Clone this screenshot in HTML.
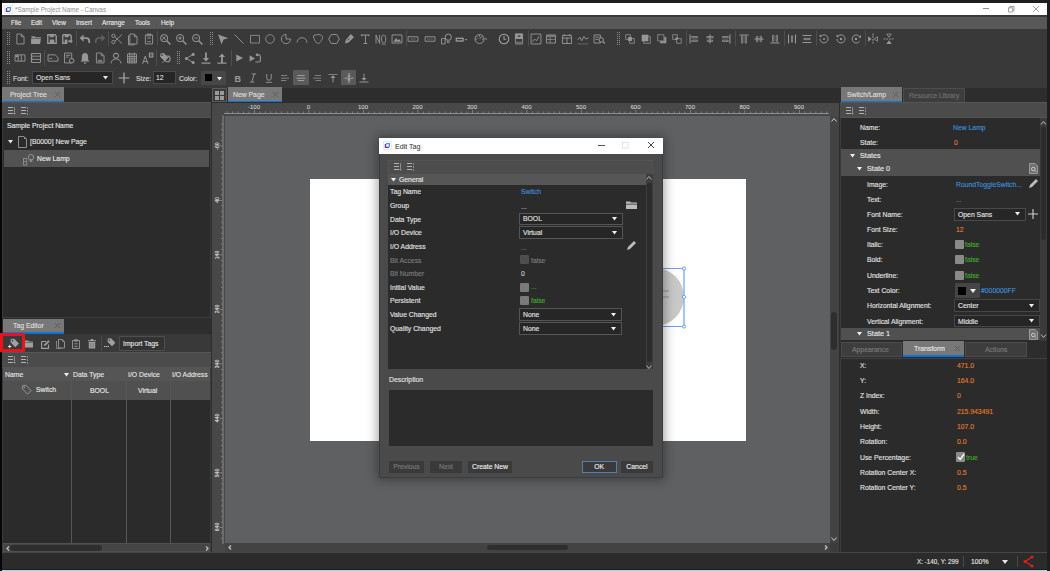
<!DOCTYPE html><html><head><meta charset="utf-8"><style>
*{margin:0;padding:0;box-sizing:border-box}
html,body{width:1050px;height:571px;overflow:hidden;background:#1e1e1e;font-family:"Liberation Sans",sans-serif}
.a{position:absolute}
.t{position:absolute;white-space:nowrap;line-height:12px;height:12px;font-size:7.5px;-webkit-text-stroke:0.15px currentColor;transform:scaleX(.91);transform-origin:0 50%}
.tc{transform-origin:50% 50%}
svg{overflow:visible}
</style></head><body><div class="a" style="left:2px;top:3px;width:1045px;height:12px;background:#ffffff;"></div>
<div class="a" style="left:2px;top:15px;width:1045px;height:1.5px;background:#3a3a3a;"></div>
<svg class="a" style="left:3.5px;top:4.5px;" width="9" height="9" viewBox="0 0 9 9"><rect x="0.5" y="0.5" width="8" height="8" fill="#fafafa" stroke="#e8e8ec" stroke-width="0.8"/><path d="M3 2h4v4h-1.3v-2.7h-2.7z" fill="#3aa0dd"/><path d="M1.8 3h1.4v2.7h2.8v1.3h-4.2z" fill="#6b3c9b"/></svg>
<div class="t" style="left:15px;top:4.1px;color:#959595;font-size:7.2px;transform:scaleX(.88);-webkit-text-stroke:0.05px currentColor">*Sample Project Name - Canvas</div>
<svg class="a" style="left:983px;top:8px;" width="6" height="1" viewBox="0 0 6 1"><path d="M0 0.5h6" stroke="#777" stroke-width="0.8"/></svg>
<svg class="a" style="left:1007.5px;top:5.5px;" width="6.5" height="6.5" viewBox="0 0 6.5 6.5"><path d="M0.5 1.8h4.2v4.2h-4.2z M1.8 1.8v-1.3h4.2v4.2h-1.3" fill="none" stroke="#888" stroke-width="0.8"/></svg>
<svg class="a" style="left:1032.5px;top:5.5px;" width="6" height="6" viewBox="0 0 6 6"><path d="M0 0l6 6 M6 0l-6 6" stroke="#888" stroke-width="0.8"/></svg>
<div class="a" style="left:2px;top:16.5px;width:1045px;height:12.5px;background:#585858;"></div>
<div class="t" style="left:11px;top:17.1px;color:#e6e6e6;font-size:7.2px;transform:scaleX(.89)">File</div>
<div class="t" style="left:30.5px;top:17.1px;color:#e6e6e6;font-size:7.2px;transform:scaleX(.89)">Edit</div>
<div class="t" style="left:51.5px;top:17.1px;color:#e6e6e6;font-size:7.2px;transform:scaleX(.89)">View</div>
<div class="t" style="left:76px;top:17.1px;color:#e6e6e6;font-size:7.2px;transform:scaleX(.89)">Insert</div>
<div class="t" style="left:102px;top:17.1px;color:#e6e6e6;font-size:7.2px;transform:scaleX(.89)">Arrange</div>
<div class="t" style="left:135px;top:17.1px;color:#e6e6e6;font-size:7.2px;transform:scaleX(.89)">Tools</div>
<div class="t" style="left:160.5px;top:17.1px;color:#e6e6e6;font-size:7.2px;transform:scaleX(.89)">Help</div>
<div class="a" style="left:2px;top:29px;width:1045px;height:59px;background:#393939;"></div>
<div class="a" style="left:2px;top:88px;width:1045px;height:465px;background:#2d2d2d;"></div>
<div class="a" style="left:2px;top:552px;width:1045px;height:1px;background:#4a4a4a;"></div>
<div class="a" style="left:2px;top:553px;width:1045px;height:16px;background:#2b2b2b;"></div>
<div class="a" style="left:2px;top:569.5px;width:1045px;height:1.5px;background:#c4cad2;"></div>
<div class="a" style="left:0px;top:0px;width:1.5px;height:571px;background:#060606;"></div>
<div class="t" style="left:917px;top:556.1px;color:#e0e0e0;font-size:7.5px;transform:scaleX(.84)">X: -140, Y: 299</div>
<div class="a" style="left:963px;top:556px;width:1px;height:11px;background:#4a4a4a;"></div>
<div class="t" style="left:971px;top:556.1px;color:#e0e0e0;font-size:7.5px;">100%</div>
<svg class="a" style="left:1002px;top:560px;" width="6" height="4" viewBox="0 0 6 4"><path d="M0 0h6l-3 4z" fill="#e8e8e8"/></svg>
<div class="a" style="left:1017px;top:556px;width:1px;height:11px;background:#4a4a4a;"></div>
<svg class="a" style="left:1023px;top:555px;" width="11" height="13" viewBox="0 0 11 13"><circle cx="9" cy="2" r="1.6" fill="#e0201c"/><circle cx="2" cy="6.5" r="1.6" fill="#e0201c"/><circle cx="9" cy="11" r="1.6" fill="#e0201c"/><path d="M9 2L2 6.5 9 11" fill="none" stroke="#e0201c" stroke-width="1.3"/></svg>
<svg class="a" style="left:13.0px;top:31.5px;" width="14" height="14" viewBox="0 0 14 14"><g transform="translate(7.0 7.0) scale(0.9) translate(-7.0 -7.0)"><path d="M3.5 1.5h5l3 3v8h-8z M8.5 1.5v3h3" fill="none" stroke="#979797" stroke-width="1"/></g></svg>
<svg class="a" style="left:29.0px;top:31.5px;" width="14" height="14" viewBox="0 0 14 14"><g transform="translate(7.0 7.0) scale(0.9) translate(-7.0 -7.0)"><path d="M1.5 4h4l1 1h6v1h-10z" fill="#979797"/><path d="M1.5 6.5h11l-1 6h-10z" fill="#979797"/></g></svg>
<svg class="a" style="left:45.0px;top:31.5px;" width="14" height="14" viewBox="0 0 14 14"><g transform="translate(7.0 7.0) scale(0.9) translate(-7.0 -7.0)"><path d="M2.3 2.3h8l1.4 1.4v8h-9.4z" fill="none" stroke="#979797" stroke-width="1.5"/><path d="M4.5 2h4.5v3h-4.5z M4.5 7.5h5v4h-5z" fill="#979797"/></g></svg>
<svg class="a" style="left:60.0px;top:31.5px;" width="14" height="14" viewBox="0 0 14 14"><g transform="translate(7.0 7.0) scale(0.9) translate(-7.0 -7.0)"><path d="M2.3 2.3h8l1.4 1.4v4 M2.3 2.3v9.4h5" fill="none" stroke="#979797" stroke-width="1.5"/><path d="M4.5 2h4.5v3h-4.5z M4.5 7.5h3v4h-3z" fill="#979797"/><path d="M8.5 8.5h2.5v-1.5l2.5 2.5-2.5 2.5v-1.5h-2.5z" fill="#979797"/></g></svg>
<svg class="a" style="left:78.0px;top:31.5px;" width="14" height="14" viewBox="0 0 14 14"><g transform="translate(7.0 7.0) scale(0.9) translate(-7.0 -7.0)"><path d="M5 6h3.5a3.2 3.2 0 0 1 3.2 3.2v2.3" fill="none" stroke="#979797" stroke-width="2"/><path d="M1 6l4.5-4v8z" fill="#979797"/></g></svg>
<svg class="a" style="left:93.0px;top:31.5px;" width="14" height="14" viewBox="0 0 14 14"><g transform="translate(7.0 7.0) scale(0.9) translate(-7.0 -7.0)"><path d="M9 6h-3.5a3.2 3.2 0 0 0 -3.2 3.2v2.3" fill="none" stroke="#5e5e5e" stroke-width="2"/><path d="M13 6l-4.5-4v8z" fill="#5e5e5e"/></g></svg>
<svg class="a" style="left:110.0px;top:31.5px;" width="14" height="14" viewBox="0 0 14 14"><g transform="translate(7.0 7.0) scale(0.9) translate(-7.0 -7.0)"><path d="M4.5 4.5l8 7.5 M4.5 9.5l8-7.5" fill="none" stroke="#979797" stroke-width="1"/><circle cx="3" cy="3.5" r="1.8" fill="none" stroke="#979797"/><circle cx="3" cy="10.5" r="1.8" fill="none" stroke="#979797"/></g></svg>
<svg class="a" style="left:126.0px;top:31.5px;" width="14" height="14" viewBox="0 0 14 14"><g transform="translate(7.0 7.0) scale(0.9) translate(-7.0 -7.0)"><path d="M3.5 1.5h5l3 3v8h-8z M8.5 1.5v3h3" fill="none" stroke="#979797" stroke-width="1"/><path d="M2 3v10.5h7" fill="none" stroke="#979797" stroke-width="1"/></g></svg>
<svg class="a" style="left:141.5px;top:31.5px;" width="14" height="14" viewBox="0 0 14 14"><g transform="translate(7.0 7.0) scale(0.9) translate(-7.0 -7.0)"><path d="M3 2.5h8v10h-8z M5 1.5h4v2h-4z M5 6h4 M5 10h4" fill="none" stroke="#979797" stroke-width="1"/></g></svg>
<svg class="a" style="left:158.0px;top:31.5px;" width="14" height="14" viewBox="0 0 14 14"><g transform="translate(7.0 7.0) scale(0.9) translate(-7.0 -7.0)"><circle cx="6" cy="6" r="4" fill="none" stroke="#a3a3a3"/><path d="M9 9l4 4" fill="none" stroke="#979797" stroke-width="1.6"/><path d="M4 4l4 4 M8 4l-4 4" fill="none" stroke="#979797" stroke-width="1"/></g></svg>
<svg class="a" style="left:174.0px;top:31.5px;" width="14" height="14" viewBox="0 0 14 14"><g transform="translate(7.0 7.0) scale(0.9) translate(-7.0 -7.0)"><circle cx="6" cy="6" r="4" fill="none" stroke="#a3a3a3"/><path d="M9 9l4 4" fill="none" stroke="#979797" stroke-width="1.6"/><path d="M4 6h4 M6 4v4" fill="none" stroke="#979797" stroke-width="1"/></g></svg>
<svg class="a" style="left:190.0px;top:31.5px;" width="14" height="14" viewBox="0 0 14 14"><g transform="translate(7.0 7.0) scale(0.9) translate(-7.0 -7.0)"><circle cx="6" cy="6" r="4" fill="none" stroke="#a3a3a3"/><path d="M9 9l4 4" fill="none" stroke="#979797" stroke-width="1.6"/><path d="M4 6h4" fill="none" stroke="#979797" stroke-width="1"/></g></svg>
<svg class="a" style="left:216.0px;top:31.5px;" width="14" height="14" viewBox="0 0 14 14"><g transform="translate(7.0 7.0) scale(0.9) translate(-7.0 -7.0)"><path d="M1.5 2L13 6.3 7.5 7.5 5.5 13z" fill="#979797"/></g></svg>
<svg class="a" style="left:232.0px;top:31.5px;" width="14" height="14" viewBox="0 0 14 14"><g transform="translate(7.0 7.0) scale(0.9) translate(-7.0 -7.0)"><path d="M2 2l10 10" fill="none" stroke="#979797" stroke-width="1"/></g></svg>
<svg class="a" style="left:247.5px;top:31.5px;" width="14" height="14" viewBox="0 0 14 14"><g transform="translate(7.0 7.0) scale(0.9) translate(-7.0 -7.0)"><path d="M2 3h10v8.5h-10z" fill="none" stroke="#979797" stroke-width="0.9"/></g></svg>
<svg class="a" style="left:263.0px;top:31.5px;" width="14" height="14" viewBox="0 0 14 14"><g transform="translate(7.0 7.0) scale(0.9) translate(-7.0 -7.0)"><circle cx="7" cy="7" r="4.8" fill="none" stroke="#979797" stroke-width="0.9"/></g></svg>
<svg class="a" style="left:278.5px;top:31.5px;" width="14" height="14" viewBox="0 0 14 14"><g transform="translate(7.0 7.0) scale(0.9) translate(-7.0 -7.0)"><path d="M7 7v-5.2 A5.2 5.2 0 1 0 12.2 7z" fill="none" stroke="#979797" stroke-width="1"/></g></svg>
<svg class="a" style="left:295.0px;top:31.5px;" width="14" height="14" viewBox="0 0 14 14"><g transform="translate(7.0 7.0) scale(0.9) translate(-7.0 -7.0)"><path d="M1.5 11A5.5 5.5 0 0 1 12.5 11" fill="none" stroke="#979797" stroke-width="1"/></g></svg>
<svg class="a" style="left:311.0px;top:31.5px;" width="14" height="14" viewBox="0 0 14 14"><g transform="translate(7.0 7.0) scale(0.9) translate(-7.0 -7.0)"><path d="M2 3.5 C6 1 12 2 12 5 C12 8 9 12 7 12 C5 12 2 7 2 3.5z" fill="none" stroke="#979797" stroke-width="1"/></g></svg>
<svg class="a" style="left:326.5px;top:31.5px;" width="14" height="14" viewBox="0 0 14 14"><g transform="translate(7.0 7.0) scale(0.9) translate(-7.0 -7.0)"><path d="M4 2h6l3 5-3 5h-6l-3-5z" fill="none" stroke="#979797" stroke-width="1"/></g></svg>
<svg class="a" style="left:342.0px;top:31.5px;" width="14" height="14" viewBox="0 0 14 14"><g transform="translate(7.0 7.0) scale(0.9) translate(-7.0 -7.0)"><path d="M9 1.5l3.5 3.5-6 6-4 1 1-4z" fill="#979797"/><path d="M5.5 8.5l2-2" fill="none" stroke="#393939" stroke-width="1"/></g></svg>
<svg class="a" style="left:358.0px;top:31.5px;" width="14" height="14" viewBox="0 0 14 14"><g transform="translate(7.0 7.0) scale(0.9) translate(-7.0 -7.0)"><path d="M2 2h10v2h-1l-.5-.8h-2.5v8.3h1.5v1h-4v-1h1.5v-8.3h-2.5l-.5.8h-1z" fill="#979797"/></g></svg>
<svg class="a" style="left:374.0px;top:31.5px;" width="14" height="14" viewBox="0 0 14 14"><g transform="translate(7.0 7.0) scale(0.9) translate(-7.0 -7.0)"><path d="M1.5 12V2.5l4 9.5V2.5" fill="none" stroke="#979797" stroke-width="1"/><ellipse cx="10" cy="7" rx="2.3" ry="4.5" fill="none" stroke="#979797" stroke-width="1"/><path d="M7.5 12.8h5" fill="none" stroke="#979797" stroke-width="0.8"/></g></svg>
<svg class="a" style="left:390.0px;top:31.5px;" width="14" height="14" viewBox="0 0 14 14"><g transform="translate(7.0 7.0) scale(0.9) translate(-7.0 -7.0)"><path d="M1.5 2.5h11v9h-11z" fill="none" stroke="#979797" stroke-width="1"/><path d="M3 10l3-4 2 2.5 1.5-1.5 2 3z" fill="#979797"/></g></svg>
<svg class="a" style="left:406.0px;top:31.5px;" width="14" height="14" viewBox="0 0 14 14"><g transform="translate(7.0 7.0) scale(0.9) translate(-7.0 -7.0)"><path d="M1.5 4.5h11v5h-11z" fill="none" stroke="#979797" stroke-width="1"/><path d="M4 6.5h6v1h-6z" fill="#6e6e6e"/></g></svg>
<svg class="a" style="left:422.5px;top:31.5px;" width="14" height="14" viewBox="0 0 14 14"><g transform="translate(7.0 7.0) scale(0.9) translate(-7.0 -7.0)"><path d="M1.5 4.5h11v5h-11z" fill="none" stroke="#979797" stroke-width="1"/><path d="M4 6.3h1.3v1.4h-1.3z M6.3 6.3h1.3v1.4h-1.3z M8.6 6.3h1.3v1.4h-1.3z" fill="#6e6e6e"/></g></svg>
<svg class="a" style="left:438.5px;top:31.5px;" width="14" height="14" viewBox="0 0 14 14"><g transform="translate(7.0 7.0) scale(0.9) translate(-7.0 -7.0)"><path d="M2 6.5h4v6h-4z" fill="none" stroke="#979797" stroke-width="1"/><circle cx="9.5" cy="5" r="3.5" fill="none" stroke="#a3a3a3"/><path d="M8.5 9v2h2v-2" fill="none" stroke="#979797" stroke-width="1"/></g></svg>
<svg class="a" style="left:454.0px;top:31.5px;" width="14" height="14" viewBox="0 0 14 14"><g transform="translate(7.0 7.0) scale(0.9) translate(-7.0 -7.0)"><path d="M1 5.5h9v4.5h-9z" fill="#979797"/><path d="M2.5 7h6v1.5h-6z" fill="#393939"/><path d="M11 7h3l-1.5 2z" fill="#979797"/></g></svg>
<svg class="a" style="left:473.0px;top:31.5px;" width="14" height="14" viewBox="0 0 14 14"><g transform="translate(7.0 7.0) scale(0.9) translate(-7.0 -7.0)"><path d="M6.5 2A5 5 0 1 1 6.49 2z" fill="none" stroke="#979797" stroke-width="1.1"/><path d="M6.5 2.5v2 M2 7h2 M9 7h2 M3.3 3.8l1.3 1.3 M9.7 3.8l-1.3 1.3 M6.5 7l2-2.5" fill="none" stroke="#979797" stroke-width="1"/><path d="M12.5 6.5h2.5l-1.25 1.8z" fill="#979797"/></g></svg>
<svg class="a" style="left:496.5px;top:31.5px;" width="14" height="14" viewBox="0 0 14 14"><g transform="translate(7.0 7.0) scale(0.9) translate(-7.0 -7.0)"><circle cx="7" cy="7" r="5.3" fill="none" stroke="#a3a3a3" stroke-width="1.2"/><path d="M7 3.5v3.8h2.5" fill="none" stroke="#979797" stroke-width="1.2"/></g></svg>
<svg class="a" style="left:511.5px;top:31.5px;" width="14" height="14" viewBox="0 0 14 14"><g transform="translate(7.0 7.0) scale(0.9) translate(-7.0 -7.0)"><path d="M3 1.5h8v11h-8z" fill="none" stroke="#979797" stroke-width="1"/><path d="M3 1h8v6h-8z" fill="#979797"/><path d="M5.5 3h3v1.5h-3z" fill="#393939"/><path d="M3 10h8v2.5h-8z" fill="#6e6e6e"/></g></svg>
<svg class="a" style="left:529.0px;top:31.5px;" width="14" height="14" viewBox="0 0 14 14"><g transform="translate(7.0 7.0) scale(0.9) translate(-7.0 -7.0)"><path d="M1.5 1.5h11v11h-11z" fill="none" stroke="#979797" stroke-width="1"/><path d="M3 10l2.5-3 2 2 3-5" fill="none" stroke="#979797" stroke-width="1"/></g></svg>
<svg class="a" style="left:544.0px;top:31.5px;" width="14" height="14" viewBox="0 0 14 14"><g transform="translate(7.0 7.0) scale(0.9) translate(-7.0 -7.0)"><path d="M2 2.5h10v9h-10z" fill="none" stroke="#979797" stroke-width="1"/><path d="M2 2.5h10v2.5h-10z" fill="#7a7a7a"/><path d="M2 7.5h10 M6 5v6.5" fill="none" stroke="#979797" stroke-width="0.8"/></g></svg>
<svg class="a" style="left:560.0px;top:31.5px;" width="14" height="14" viewBox="0 0 14 14"><g transform="translate(7.0 7.0) scale(0.9) translate(-7.0 -7.0)"><path d="M2 3h10v9h-10z M7 5.5v6.5 M2 6h10" fill="none" stroke="#979797" stroke-width="1"/><path d="M3.5 1.5h1v2.5h-1z M9.5 1.5h1v2.5h-1z" fill="#979797"/></g></svg>
<svg class="a" style="left:576.0px;top:31.5px;" width="14" height="14" viewBox="0 0 14 14"><g transform="translate(7.0 7.0) scale(0.9) translate(-7.0 -7.0)"><path d="M1 8l2.5-3 2 4 2.5-5 2 3 3-1" fill="none" stroke="#979797" stroke-width="1"/><path d="M1 12.5h12" fill="none" stroke="#6a6a6a" stroke-width="1"/></g></svg>
<svg class="a" style="left:592.0px;top:31.5px;" width="14" height="14" viewBox="0 0 14 14"><g transform="translate(7.0 7.0) scale(0.9) translate(-7.0 -7.0)"><path d="M1.5 2.5h7v9h-7z M3 5h4 M3 7.5h3" fill="none" stroke="#979797" stroke-width="1"/><circle cx="9.5" cy="8" r="2.5" fill="#393939" stroke="#a3a3a3"/><path d="M11.5 10l2 2" fill="none" stroke="#979797" stroke-width="1.4"/></g></svg>
<svg class="a" style="left:623.0px;top:31.5px;" width="14" height="14" viewBox="0 0 14 14"><g transform="translate(7.0 7.0) scale(0.78) translate(-7.0 -7.0)"><path d="M1.5 1.5h6v6h-6z M6.5 6.5h6v6h-6z" fill="none" stroke="#979797" stroke-width="1"/><path d="M4.5 4.5h5v5h-5z" fill="#979797"/></g></svg>
<svg class="a" style="left:639.0px;top:31.5px;" width="14" height="14" viewBox="0 0 14 14"><g transform="translate(7.0 7.0) scale(0.78) translate(-7.0 -7.0)"><path d="M1.5 1.5h8.5v8.5h-8.5z" fill="#979797"/><path d="M4 4h8.5v8.5h-8.5z" fill="none" stroke="#979797" stroke-width="1"/></g></svg>
<svg class="a" style="left:655.0px;top:31.5px;" width="14" height="14" viewBox="0 0 14 14"><g transform="translate(7.0 7.0) scale(0.78) translate(-7.0 -7.0)"><path d="M1.5 1.5h8v8h-8z" fill="none" stroke="#979797" stroke-width="1"/><path d="M10 4.5h2.5v8h-8v-2.5h5.5z" fill="#979797"/></g></svg>
<svg class="a" style="left:670.0px;top:31.5px;" width="14" height="14" viewBox="0 0 14 14"><g transform="translate(7.0 7.0) scale(0.78) translate(-7.0 -7.0)"><path d="M1.5 1.5h6v6h-6z M6.5 6.5h6v6h-6z" fill="none" stroke="#979797" stroke-width="1"/><path d="M5 5h3v3h-3z" fill="#979797"/></g></svg>
<svg class="a" style="left:687.0px;top:31.5px;" width="14" height="14" viewBox="0 0 14 14"><g transform="translate(7.0 7.0) scale(0.9) translate(-7.0 -7.0)"><path d="M2 2h1.2v10h-1.2z" fill="#979797"/><path d="M4.5 4.3h6.5v1.4h-6.5z M4.5 8.3h6.5v1.4h-6.5z" fill="none" stroke="#979797" stroke-width="0.9"/></g></svg>
<svg class="a" style="left:703.0px;top:31.5px;" width="14" height="14" viewBox="0 0 14 14"><g transform="translate(7.0 7.0) scale(0.9) translate(-7.0 -7.0)"><path d="M6.4 2h1.2v10h-1.2z" fill="#979797"/><path d="M3.5 4.3h7v1.4h-7z M4 8.3h6v1.4h-6z" fill="none" stroke="#979797" stroke-width="0.9"/></g></svg>
<svg class="a" style="left:719.0px;top:31.5px;" width="14" height="14" viewBox="0 0 14 14"><g transform="translate(7.0 7.0) scale(0.9) translate(-7.0 -7.0)"><path d="M10.8 2h1.2v10h-1.2z" fill="#979797"/><path d="M3 4.3h6.5v1.4h-6.5z M3 8.3h6.5v1.4h-6.5z" fill="none" stroke="#979797" stroke-width="0.9"/></g></svg>
<svg class="a" style="left:737.0px;top:31.5px;" width="14" height="14" viewBox="0 0 14 14"><g transform="translate(7.0 7.0) scale(0.9) translate(-7.0 -7.0)"><path d="M2 2h10v1.2h-10z" fill="#979797"/><path d="M4.3 4v7.5h1.4v-7.5z M8.3 4v7.5h1.4v-7.5z" fill="none" stroke="#979797" stroke-width="0.9"/></g></svg>
<svg class="a" style="left:752.0px;top:31.5px;" width="14" height="14" viewBox="0 0 14 14"><g transform="translate(7.0 7.0) scale(0.9) translate(-7.0 -7.0)"><path d="M2 6.4h10v1.2h-10z" fill="#979797"/><path d="M4.3 4v6h1.4v-6z M8.3 4v6h1.4v-6z" fill="none" stroke="#979797" stroke-width="0.9"/></g></svg>
<svg class="a" style="left:768.0px;top:31.5px;" width="14" height="14" viewBox="0 0 14 14"><g transform="translate(7.0 7.0) scale(0.9) translate(-7.0 -7.0)"><path d="M2 10.8h10v1.2h-10z" fill="#979797"/><path d="M4.3 3v6.5h1.4v-6.5z M8.3 3v6.5h1.4v-6.5z" fill="none" stroke="#979797" stroke-width="0.9"/></g></svg>
<svg class="a" style="left:784.5px;top:31.5px;" width="14" height="14" viewBox="0 0 14 14"><g transform="translate(7.0 7.0) scale(0.9) translate(-7.0 -7.0)"><path d="M2.5 2h1.2v10h-1.2z M10.3 2h1.2v10h-1.2z" fill="#979797"/><path d="M6.3 3.5v7h1.4v-7z" fill="none" stroke="#979797" stroke-width="0.9"/></g></svg>
<svg class="a" style="left:800.0px;top:31.5px;" width="14" height="14" viewBox="0 0 14 14"><g transform="translate(7.0 7.0) scale(0.9) translate(-7.0 -7.0)"><path d="M2 2.5h10v1.2h-10z M2 10.3h10v1.2h-10z" fill="#979797"/><path d="M3.5 6.3h7v1.4h-7z" fill="none" stroke="#979797" stroke-width="0.9"/></g></svg>
<svg class="a" style="left:817.0px;top:31.5px;" width="14" height="14" viewBox="0 0 14 14"><g transform="translate(7.0 7.0) scale(0.9) translate(-7.0 -7.0)"><path d="M4 3.5A4.5 4.5 0 1 1 2.5 7" fill="none" stroke="#979797" stroke-width="1.1"/><path d="M1.5 2.5l3.5 0.5-2 2.5z" fill="#979797"/><circle cx="7" cy="7" r="1.1" fill="#979797"/></g></svg>
<svg class="a" style="left:833.5px;top:31.5px;" width="14" height="14" viewBox="0 0 14 14"><g transform="translate(7.0 7.0) scale(0.9) translate(-7.0 -7.0)"><path d="M4 3.5A4.5 4.5 0 1 1 2.5 7" fill="none" stroke="#979797" stroke-width="1.1"/><path d="M1.5 2.5l3.5 0.5-2 2.5z" fill="#979797"/><path d="M5.8 5.8h2.4v2.4h-2.4z" fill="#979797"/></g></svg>
<svg class="a" style="left:849.0px;top:31.5px;" width="14" height="14" viewBox="0 0 14 14"><g transform="translate(7.0 7.0) scale(0.9) translate(-7.0 -7.0)"><path d="M11 4.5A4.5 4.5 0 1 0 11 9.5" fill="none" stroke="#979797" stroke-width="1.1"/><path d="M12.5 2.5l0 3.5-3-1z" fill="#979797"/><path d="M5.8 5.8h2.4v2.4h-2.4z" fill="#979797"/></g></svg>
<svg class="a" style="left:866.0px;top:31.5px;" width="14" height="14" viewBox="0 0 14 14"><g transform="translate(7.0 7.0) scale(0.9) translate(-7.0 -7.0)"><path d="M6.4 1h1.2v2h-1.2z M6.4 4h1.2v2h-1.2z M6.4 7h1.2v2h-1.2z M6.4 10h1.2v2h-1.2z" fill="#979797"/><path d="M1.5 4l4 3-4 3z" fill="#979797"/><path d="M12 4.5l-3.5 2.5 3.5 2.5z" fill="none" stroke="#979797" stroke-width="0.9"/></g></svg>
<svg class="a" style="left:882.0px;top:31.5px;" width="14" height="14" viewBox="0 0 14 14"><g transform="translate(7.0 7.0) scale(0.9) translate(-7.0 -7.0)"><path d="M1 6.4h2v1.2h-2z M4 6.4h2v1.2h-2z M7 6.4h2v1.2h-2z M10 6.4h2v1.2h-2z" fill="#979797"/><path d="M4 12.5l3-4 3 4z" fill="#979797"/><path d="M4.5 1.5l2.5 3.5 2.5-3.5z" fill="none" stroke="#979797" stroke-width="0.9"/></g></svg>
<svg class="a" style="left:13.0px;top:51.0px;" width="14" height="14" viewBox="0 0 14 14"><g transform="translate(7.0 7.0) scale(0.9) translate(-7.0 -7.0)"><path d="M1.5 3.5h11v7h-11z M5 3.5v7 M8.5 3.5v7" fill="none" stroke="#979797" stroke-width="1"/><path d="M2 4h3v2h-3z" fill="#979797"/></g></svg>
<svg class="a" style="left:29.0px;top:51.0px;" width="14" height="14" viewBox="0 0 14 14"><g transform="translate(7.0 7.0) scale(0.9) translate(-7.0 -7.0)"><path d="M2 2h10v10h-10z M2 5h10 M2 8.5h10" fill="none" stroke="#979797" stroke-width="1"/><path d="M1 3h2v1h-2z M1 6.5h2v1h-2z M1 10h2v1h-2z" fill="#979797"/></g></svg>
<svg class="a" style="left:45.5px;top:51.0px;" width="14" height="14" viewBox="0 0 14 14"><g transform="translate(7.0 7.0) scale(0.9) translate(-7.0 -7.0)"><path d="M1.5 3.5h8l3 3v4h-11z" fill="none" stroke="#979797" stroke-width="1"/><path d="M3 7.5h3" fill="none" stroke="#979797" stroke-width="1"/></g></svg>
<svg class="a" style="left:62.0px;top:51.0px;" width="14" height="14" viewBox="0 0 14 14"><g transform="translate(7.0 7.0) scale(0.9) translate(-7.0 -7.0)"><path d="M2 1.5h8v11h-8z M3.5 4h5 M3.5 6h3" fill="none" stroke="#979797" stroke-width="1"/><circle cx="10" cy="10" r="2.5" fill="#393939" stroke="#a3a3a3"/></g></svg>
<svg class="a" style="left:77.5px;top:51.0px;" width="14" height="14" viewBox="0 0 14 14"><g transform="translate(7.0 7.0) scale(0.9) translate(-7.0 -7.0)"><path d="M7 1.5c2.5 0 3.5 2 3.5 4.5v3l1.5 2h-10l1.5-2v-3c0-2.5 1-4.5 3.5-4.5z M5.5 12h3a1.5 1.5 0 0 1 -3 0z" fill="#979797"/></g></svg>
<svg class="a" style="left:93.0px;top:51.0px;" width="14" height="14" viewBox="0 0 14 14"><g transform="translate(7.0 7.0) scale(0.9) translate(-7.0 -7.0)"><path d="M3 1.5h5.5l3 3v8h-8.5z M8.5 1.5v3h3" fill="none" stroke="#979797" stroke-width="1"/><path d="M4.5 9h5v2.5h-5z" fill="#7a7a7a"/></g></svg>
<svg class="a" style="left:109.0px;top:51.0px;" width="14" height="14" viewBox="0 0 14 14"><g transform="translate(7.0 7.0) scale(0.9) translate(-7.0 -7.0)"><circle cx="7" cy="4.5" r="2.8" fill="none" stroke="#a3a3a3" stroke-width="1.1"/><path d="M1.5 13a5.5 5 0 0 1 11 0" fill="none" stroke="#979797" stroke-width="1.1"/></g></svg>
<svg class="a" style="left:125.0px;top:51.0px;" width="14" height="14" viewBox="0 0 14 14"><g transform="translate(7.0 7.0) scale(0.9) translate(-7.0 -7.0)"><path d="M2 2.5h10v10h-10z M2 5.5h10 M2 8h10 M2 10.5h10 M4.5 2.5v10 M7 2.5v10 M9.5 2.5v10" fill="none" stroke="#979797" stroke-width="1"/><path d="M4 1h1v2h-1z M9 1h1v2h-1z" fill="#979797"/></g></svg>
<svg class="a" style="left:141.0px;top:51.0px;" width="14" height="14" viewBox="0 0 14 14"><g transform="translate(7.0 7.0) scale(0.9) translate(-7.0 -7.0)"><path d="M1 13.5L4 5l3 8.5 M2 10.8h4" fill="none" stroke="#979797" stroke-width="1.1"/><path d="M8 1h5v5.5h-5z" fill="#979797"/><path d="M9.2 2.2h2.6v3h-2.6z" fill="#393939"/><path d="M10 2.8h1v1.8h-1z" fill="#979797"/></g></svg>
<svg class="a" style="left:157.5px;top:51.0px;" width="14" height="14" viewBox="0 0 14 14"><g transform="translate(7.0 7.0) scale(0.9) translate(-7.0 -7.0)"><g transform="translate(5.5 5.5) rotate(45)"><path d="M-5 0L-2.8-2.8H4.5V2.8H-2.8Z" fill="#979797"/><circle cx="-2.5" cy="0" r="0.9" fill="#393939"/></g><circle cx="9.5" cy="8" r="3.2" fill="none" stroke="#979797" stroke-width="1.2"/><path d="M4 12.5l8-8" fill="none" stroke="#979797" stroke-width="1"/></g></svg>
<svg class="a" style="left:183.0px;top:51.0px;" width="14" height="14" viewBox="0 0 14 14"><g transform="translate(7.0 7.0) scale(0.9) translate(-7.0 -7.0)"><circle cx="10.5" cy="3" r="1.7" fill="#979797"/><circle cx="3" cy="7.5" r="1.7" fill="#979797"/><circle cx="10.5" cy="12" r="1.7" fill="#979797"/><path d="M10.5 3L3 7.5 10.5 12" fill="none" stroke="#979797" stroke-width="1"/></g></svg>
<svg class="a" style="left:199.0px;top:51.0px;" width="14" height="14" viewBox="0 0 14 14"><g transform="translate(7.0 7.0) scale(0.9) translate(-7.0 -7.0)"><path d="M6 1h2v6h2.5l-3.5 4-3.5-4h2.5z M2 12h10v1.3h-10z" fill="#979797"/></g></svg>
<svg class="a" style="left:214.5px;top:51.0px;" width="14" height="14" viewBox="0 0 14 14"><g transform="translate(7.0 7.0) scale(0.9) translate(-7.0 -7.0)"><path d="M6 12v-6h-2.5l3.5-4 3.5 4h-2.5v6z M2 12h10v1.3h-10z" fill="#979797"/></g></svg>
<svg class="a" style="left:231.5px;top:51.0px;" width="14" height="14" viewBox="0 0 14 14"><g transform="translate(7.0 7.0) scale(0.9) translate(-7.0 -7.0)"><path d="M4 3l7.5 4-7.5 4z" fill="#979797"/></g></svg>
<svg class="a" style="left:247.5px;top:51.0px;" width="14" height="14" viewBox="0 0 14 14"><g transform="translate(7.0 7.0) scale(0.9) translate(-7.0 -7.0)"><path d="M1 4l6 3.5-6 3.5z" fill="#979797"/><path d="M9.5 3.5h1.5a2 2 0 0 1 2 2v4a2 2 0 0 1-2 2h-3.5" fill="none" stroke="#979797" stroke-width="1.2"/><circle cx="9.3" cy="3.5" r="1.5" fill="#979797"/></g></svg>
<svg class="a" style="left:6px;top:32px;" width="4" height="14" viewBox="0 0 4 14"><rect x="1" y="0" width="1" height="1" fill="#8a8a8a"/><rect x="3" y="0" width="1" height="1" fill="#8a8a8a"/><rect x="1" y="2" width="1" height="1" fill="#8a8a8a"/><rect x="3" y="2" width="1" height="1" fill="#8a8a8a"/><rect x="1" y="4" width="1" height="1" fill="#8a8a8a"/><rect x="3" y="4" width="1" height="1" fill="#8a8a8a"/><rect x="1" y="6" width="1" height="1" fill="#8a8a8a"/><rect x="3" y="6" width="1" height="1" fill="#8a8a8a"/><rect x="1" y="8" width="1" height="1" fill="#8a8a8a"/><rect x="3" y="8" width="1" height="1" fill="#8a8a8a"/><rect x="1" y="10" width="1" height="1" fill="#8a8a8a"/><rect x="3" y="10" width="1" height="1" fill="#8a8a8a"/><rect x="1" y="12" width="1" height="1" fill="#8a8a8a"/><rect x="3" y="12" width="1" height="1" fill="#8a8a8a"/></svg>
<svg class="a" style="left:209px;top:32px;" width="4" height="14" viewBox="0 0 4 14"><rect x="1" y="0" width="1" height="1" fill="#8a8a8a"/><rect x="3" y="0" width="1" height="1" fill="#8a8a8a"/><rect x="1" y="2" width="1" height="1" fill="#8a8a8a"/><rect x="3" y="2" width="1" height="1" fill="#8a8a8a"/><rect x="1" y="4" width="1" height="1" fill="#8a8a8a"/><rect x="3" y="4" width="1" height="1" fill="#8a8a8a"/><rect x="1" y="6" width="1" height="1" fill="#8a8a8a"/><rect x="3" y="6" width="1" height="1" fill="#8a8a8a"/><rect x="1" y="8" width="1" height="1" fill="#8a8a8a"/><rect x="3" y="8" width="1" height="1" fill="#8a8a8a"/><rect x="1" y="10" width="1" height="1" fill="#8a8a8a"/><rect x="3" y="10" width="1" height="1" fill="#8a8a8a"/><rect x="1" y="12" width="1" height="1" fill="#8a8a8a"/><rect x="3" y="12" width="1" height="1" fill="#8a8a8a"/></svg>
<svg class="a" style="left:616px;top:32px;" width="4" height="14" viewBox="0 0 4 14"><rect x="1" y="0" width="1" height="1" fill="#8a8a8a"/><rect x="3" y="0" width="1" height="1" fill="#8a8a8a"/><rect x="1" y="2" width="1" height="1" fill="#8a8a8a"/><rect x="3" y="2" width="1" height="1" fill="#8a8a8a"/><rect x="1" y="4" width="1" height="1" fill="#8a8a8a"/><rect x="3" y="4" width="1" height="1" fill="#8a8a8a"/><rect x="1" y="6" width="1" height="1" fill="#8a8a8a"/><rect x="3" y="6" width="1" height="1" fill="#8a8a8a"/><rect x="1" y="8" width="1" height="1" fill="#8a8a8a"/><rect x="3" y="8" width="1" height="1" fill="#8a8a8a"/><rect x="1" y="10" width="1" height="1" fill="#8a8a8a"/><rect x="3" y="10" width="1" height="1" fill="#8a8a8a"/><rect x="1" y="12" width="1" height="1" fill="#8a8a8a"/><rect x="3" y="12" width="1" height="1" fill="#8a8a8a"/></svg>
<div class="a" style="left:76px;top:31px;width:1px;height:15px;background:#4e4e4e;"></div>
<div class="a" style="left:108px;top:31px;width:1px;height:15px;background:#4e4e4e;"></div>
<div class="a" style="left:157px;top:31px;width:1px;height:15px;background:#4e4e4e;"></div>
<div class="a" style="left:406px;top:31px;width:1px;height:15px;background:#4e4e4e;"></div>
<div class="a" style="left:527.5px;top:31px;width:1px;height:15px;background:#4e4e4e;"></div>
<div class="a" style="left:686px;top:31px;width:1px;height:15px;background:#4e4e4e;"></div>
<div class="a" style="left:735px;top:31px;width:1px;height:15px;background:#4e4e4e;"></div>
<div class="a" style="left:783.5px;top:31px;width:1px;height:15px;background:#4e4e4e;"></div>
<div class="a" style="left:815.5px;top:31px;width:1px;height:15px;background:#4e4e4e;"></div>
<div class="a" style="left:864.5px;top:31px;width:1px;height:15px;background:#4e4e4e;"></div>
<svg class="a" style="left:6px;top:51px;" width="4" height="14" viewBox="0 0 4 14"><rect x="1" y="0" width="1" height="1" fill="#8a8a8a"/><rect x="3" y="0" width="1" height="1" fill="#8a8a8a"/><rect x="1" y="2" width="1" height="1" fill="#8a8a8a"/><rect x="3" y="2" width="1" height="1" fill="#8a8a8a"/><rect x="1" y="4" width="1" height="1" fill="#8a8a8a"/><rect x="3" y="4" width="1" height="1" fill="#8a8a8a"/><rect x="1" y="6" width="1" height="1" fill="#8a8a8a"/><rect x="3" y="6" width="1" height="1" fill="#8a8a8a"/><rect x="1" y="8" width="1" height="1" fill="#8a8a8a"/><rect x="3" y="8" width="1" height="1" fill="#8a8a8a"/><rect x="1" y="10" width="1" height="1" fill="#8a8a8a"/><rect x="3" y="10" width="1" height="1" fill="#8a8a8a"/><rect x="1" y="12" width="1" height="1" fill="#8a8a8a"/><rect x="3" y="12" width="1" height="1" fill="#8a8a8a"/></svg>
<svg class="a" style="left:176px;top:51px;" width="4" height="14" viewBox="0 0 4 14"><rect x="1" y="0" width="1" height="1" fill="#8a8a8a"/><rect x="3" y="0" width="1" height="1" fill="#8a8a8a"/><rect x="1" y="2" width="1" height="1" fill="#8a8a8a"/><rect x="3" y="2" width="1" height="1" fill="#8a8a8a"/><rect x="1" y="4" width="1" height="1" fill="#8a8a8a"/><rect x="3" y="4" width="1" height="1" fill="#8a8a8a"/><rect x="1" y="6" width="1" height="1" fill="#8a8a8a"/><rect x="3" y="6" width="1" height="1" fill="#8a8a8a"/><rect x="1" y="8" width="1" height="1" fill="#8a8a8a"/><rect x="3" y="8" width="1" height="1" fill="#8a8a8a"/><rect x="1" y="10" width="1" height="1" fill="#8a8a8a"/><rect x="3" y="10" width="1" height="1" fill="#8a8a8a"/><rect x="1" y="12" width="1" height="1" fill="#8a8a8a"/><rect x="3" y="12" width="1" height="1" fill="#8a8a8a"/></svg>
<div class="a" style="left:44px;top:50px;width:1px;height:16px;background:#4e4e4e;"></div>
<div class="a" style="left:156px;top:50px;width:1px;height:16px;background:#4e4e4e;"></div>
<div class="a" style="left:230.5px;top:50px;width:1px;height:16px;background:#4e4e4e;"></div>
<svg class="a" style="left:6px;top:71px;" width="4" height="14" viewBox="0 0 4 14"><rect x="1" y="0" width="1" height="1" fill="#8a8a8a"/><rect x="3" y="0" width="1" height="1" fill="#8a8a8a"/><rect x="1" y="2" width="1" height="1" fill="#8a8a8a"/><rect x="3" y="2" width="1" height="1" fill="#8a8a8a"/><rect x="1" y="4" width="1" height="1" fill="#8a8a8a"/><rect x="3" y="4" width="1" height="1" fill="#8a8a8a"/><rect x="1" y="6" width="1" height="1" fill="#8a8a8a"/><rect x="3" y="6" width="1" height="1" fill="#8a8a8a"/><rect x="1" y="8" width="1" height="1" fill="#8a8a8a"/><rect x="3" y="8" width="1" height="1" fill="#8a8a8a"/><rect x="1" y="10" width="1" height="1" fill="#8a8a8a"/><rect x="3" y="10" width="1" height="1" fill="#8a8a8a"/><rect x="1" y="12" width="1" height="1" fill="#8a8a8a"/><rect x="3" y="12" width="1" height="1" fill="#8a8a8a"/></svg>
<div class="t" style="left:12.5px;top:72.6px;color:#d8d8d8;font-size:7.5px;">Font:</div>
<div class="a" style="left:32px;top:71px;width:81px;height:13px;background:#262626;border:1px solid #4a4a4a;"></div>
<div class="t" style="left:36px;top:72.1px;color:#dcdcdc;font-size:7.5px;">Open Sans</div>
<svg class="a" style="left:103px;top:75.8px;" width="5" height="3.5" viewBox="0 0 5 3.5"><path d="M0 0h5l-2.5 3.5z" fill="#e6e6e6"/></svg>
<svg class="a" style="left:117.0px;top:71.0px;" width="14" height="14" viewBox="0 0 14 14"><g transform="translate(7.0 7.0) scale(0.9) translate(-7.0 -7.0)"><path d="M7 1v12 M1 7h12" fill="none" stroke="#b0b0b0" stroke-width="1.3"/></g></svg>
<div class="t" style="left:136px;top:72.6px;color:#d8d8d8;font-size:7.5px;">Size:</div>
<div class="a" style="left:153px;top:71px;width:23px;height:13px;background:#262626;border:1px solid #4a4a4a;"></div>
<div class="t" style="left:156px;top:72.1px;color:#dcdcdc;font-size:7.5px;">12</div>
<div class="t" style="left:179px;top:72.6px;color:#d8d8d8;font-size:7.5px;">Color:</div>
<div class="a" style="left:201px;top:71px;width:25px;height:14px;background:#474747;border-radius:1px;"></div>
<div class="a" style="left:205px;top:74px;width:7px;height:7px;background:#000;"></div>
<svg class="a" style="left:216.5px;top:76.5px;" width="5" height="3.5" viewBox="0 0 5 3.5"><path d="M0 0h5l-2.5 3.5z" fill="#f0f0f0"/></svg>
<svg class="a" style="left:233.5px;top:73.5px;" width="8" height="9" viewBox="0 0 8 9"><text x="0.5" y="8" font-size="9" font-weight="bold" font-family="Liberation Sans" fill="#9c9c9c">B</text></svg>
<svg class="a" style="left:246.0px;top:71.0px;" width="14" height="14" viewBox="0 0 14 14"><g transform="translate(7.0 7.0) scale(0.9) translate(-7.0 -7.0)"><path d="M5.5 2.5h5 M3.5 11.5h5 M8.3 2.5l-2.6 9" fill="none" stroke="#979797" stroke-width="1"/></g></svg>
<svg class="a" style="left:262.0px;top:71.0px;" width="14" height="14" viewBox="0 0 14 14"><g transform="translate(7.0 7.0) scale(0.9) translate(-7.0 -7.0)"><path d="M4.5 2.5v4.5a2.5 2.5 0 0 0 5 0v-4.5 M3.5 11.8h7" fill="none" stroke="#979797" stroke-width="1"/></g></svg>
<svg class="a" style="left:278.0px;top:71.0px;" width="14" height="14" viewBox="0 0 14 14"><g transform="translate(7.0 7.0) scale(0.9) translate(-7.0 -7.0)"><path d="M2.5 4h7v0.9h-7z M2.5 6.6h9v0.9h-9z M2.5 9.2h6v0.9h-6z" fill="#979797"/></g></svg>
<div class="a" style="left:293px;top:70px;width:16px;height:15px;background:#5a5a5a;border-radius:1px;"></div>
<svg class="a" style="left:294.0px;top:71.0px;" width="14" height="14" viewBox="0 0 14 14"><g transform="translate(7.0 7.0) scale(0.9) translate(-7.0 -7.0)"><path d="M3 4h8v0.9h-8z M2 6.6h10v0.9h-10z M3.5 9.2h7v0.9h-7z" fill="#b5b5b5"/></g></svg>
<svg class="a" style="left:310.0px;top:71.0px;" width="14" height="14" viewBox="0 0 14 14"><g transform="translate(7.0 7.0) scale(0.9) translate(-7.0 -7.0)"><path d="M4.5 4h7v0.9h-7z M2.5 6.6h9v0.9h-9z M5.5 9.2h6v0.9h-6z" fill="#979797"/></g></svg>
<svg class="a" style="left:325.5px;top:71.0px;" width="14" height="14" viewBox="0 0 14 14"><g transform="translate(7.0 7.0) scale(0.9) translate(-7.0 -7.0)"><path d="M2 2.5h10v0.9h-10z M7 4l2.8 3h-2.3v5h-1v-5h-2.3z" fill="#979797"/></g></svg>
<div class="a" style="left:341px;top:70px;width:15px;height:15px;background:#5a5a5a;border-radius:1px;"></div>
<svg class="a" style="left:341.5px;top:71.0px;" width="14" height="14" viewBox="0 0 14 14"><g transform="translate(7.0 7.0) scale(0.9) translate(-7.0 -7.0)"><path d="M2 6.6h10v0.9h-10z M6.5 1.5h1v3h1.5l-2 2-2-2h1.5z M6.5 12.5h1v-3h1.5l-2-2-2 2h1.5z" fill="#b5b5b5"/></g></svg>
<svg class="a" style="left:357.0px;top:71.0px;" width="14" height="14" viewBox="0 0 14 14"><g transform="translate(7.0 7.0) scale(0.9) translate(-7.0 -7.0)"><path d="M2 11h10v0.9h-10z M6.5 2h1v5h2.3l-2.8 3-2.8-3h2.3z" fill="#979797"/></g></svg>
<div class="a" style="left:2px;top:87px;width:62px;height:14px;background:#787878;"></div>
<div class="a" style="left:2px;top:100.6px;width:62px;height:1.8px;background:#0a74da;"></div>
<div class="t" style="left:10px;top:88.6px;color:#dedede;font-size:7.5px;">Project Tree</div>
<svg class="a" style="left:54.5px;top:91.8px;" width="5" height="5" viewBox="0 0 5 5"><path d="M0 0l5 5 M5 0l-5 5" stroke="#5c5c5c" stroke-width="1"/></svg>
<div class="a" style="left:2px;top:102.5px;width:209px;height:215px;background:#2b2b2b;border:1px solid #3c3c3c;"></div>
<div class="a" style="left:2px;top:102px;width:209px;height:16px;background:#4b4b4b;border-top:1px solid #565656;border-bottom:1px solid #545454;"></div>
<svg class="a" style="left:8px;top:107px;" width="8" height="8" viewBox="0 0 8 8"><path d="M0 0.5h5 M0 3.5h5 M0 6.5h5" stroke="#b0b0b0" stroke-width="1"/><path d="M6.5 0v7" stroke="#8a8a8a" stroke-width="1"/><path d="M5 6l1.5 2 1.5-2z" fill="#8a8a8a"/></svg>
<svg class="a" style="left:21px;top:107px;" width="8" height="8" viewBox="0 0 8 8"><path d="M0 0.5h5 M0 3.5h5 M0 6.5h5" stroke="#b0b0b0" stroke-width="1"/><path d="M6.5 0v2 M6.5 3v2 M6.5 6v2" stroke="#8a8a8a" stroke-width="1"/></svg>
<div class="t" style="left:6.5px;top:119.6px;color:#e0e0e0;font-size:7.5px;">Sample Project Name</div>
<svg class="a" style="left:8px;top:139.5px;" width="5" height="3.5" viewBox="0 0 5 3.5"><path d="M0 0h5l-2.5 3.5z" fill="#e8e8e8"/></svg>
<svg class="a" style="left:17.5px;top:136px;" width="9" height="12" viewBox="0 0 9 12"><path d="M0.5 0.5h5.5l2.5 2.5v8.5h-8z" fill="none" stroke="#8e8e8e" stroke-width="1"/><path d="M6 0.5l2.5 2.5h-2.5z" fill="#8e8e8e"/></svg>
<div class="t" style="left:29.5px;top:135.6px;color:#e0e0e0;font-size:7.5px;">[B0000] New Page</div>
<div class="a" style="left:4px;top:150px;width:205px;height:17px;background:#525252;"></div>
<svg class="a" style="left:23px;top:153.5px;" width="11" height="12" viewBox="0 0 11 12"><rect x="0.5" y="4.5" width="3.2" height="6.5" fill="none" stroke="#8e8e8e" stroke-width="0.9"/><path d="M0.5 7.5h3.2" stroke="#8e8e8e" stroke-width="0.8"/><circle cx="8" cy="3.2" r="2.7" fill="none" stroke="#9a9a9a" stroke-width="0.9"/><path d="M7 5.8v1.7h2v-1.7" fill="#8e8e8e" stroke="#8e8e8e" stroke-width="0.8"/></svg>
<div class="t" style="left:36.5px;top:153.1px;color:#e8e8e8;font-size:7.5px;">New Lamp</div>
<div class="a" style="left:3px;top:318.5px;width:61px;height:14px;background:#787878;"></div>
<div class="a" style="left:3px;top:332.1px;width:61px;height:1.8px;background:#0a74da;"></div>
<div class="t" style="left:13px;top:320.1px;color:#dedede;font-size:7.5px;">Tag Editor</div>
<svg class="a" style="left:54.5px;top:323.3px;" width="5" height="5" viewBox="0 0 5 5"><path d="M0 0l5 5 M5 0l-5 5" stroke="#5c5c5c" stroke-width="1"/></svg>
<div class="a" style="left:2px;top:334px;width:209px;height:219px;background:#2b2b2b;border-left:1px solid #3c3c3c;border-right:1px solid #3c3c3c;"></div>
<div class="a" style="left:2px;top:334px;width:209px;height:18px;background:#393939;"></div>
<div class="a" style="left:2px;top:351.5px;width:209px;height:16px;background:#4b4b4b;border-top:1px solid #565656;border-bottom:1px solid #545454;"></div>
<svg class="a" style="left:8px;top:356px;" width="8" height="8" viewBox="0 0 8 8"><path d="M0 0.5h5 M0 3.5h5 M0 6.5h5" stroke="#b0b0b0" stroke-width="1"/><path d="M6.5 0v7" stroke="#8a8a8a" stroke-width="1"/><path d="M5 6l1.5 2 1.5-2z" fill="#8a8a8a"/></svg>
<svg class="a" style="left:21px;top:356px;" width="8" height="8" viewBox="0 0 8 8"><path d="M0 0.5h5 M0 3.5h5 M0 6.5h5" stroke="#b0b0b0" stroke-width="1"/><path d="M6.5 0v2 M6.5 3v2 M6.5 6v2" stroke="#8a8a8a" stroke-width="1"/></svg>
<svg class="a" style="left:6px;top:336px;" width="14" height="14" viewBox="0 0 14 14"><g transform="translate(8.3 6.5) rotate(45)"><path d="M-5 0 L-2.8 -2.6 H4 V2.6 H-2.8 Z" fill="#a0a0a0"/><circle cx="-2.6" cy="0" r="0.8" fill="#393939"/></g><path d="M2 10.5h3.4 M3.7 8.8v3.4" stroke="#e0e0e0" stroke-width="1"/></svg>
<svg class="a" style="left:25px;top:339.5px;" width="8" height="8" viewBox="0 0 8 8"><path d="M0 0.5h3l1 1h4v1h-8z M0 3h8v4.5h-8z" fill="#a0a0a0"/></svg>
<svg class="a" style="left:40.5px;top:339.5px;" width="9" height="9" viewBox="0 0 9 9"><path d="M0.6 1.5h4.5 M0.6 1.5v6.9h6.9v-4" fill="none" stroke="#a0a0a0" stroke-width="1.1"/><path d="M7.4 0.3l1.3 1.3-4 4-1.8.5.5-1.8z" fill="#a0a0a0"/></svg>
<svg class="a" style="left:56px;top:339px;" width="9" height="10" viewBox="0 0 9 10"><path d="M2.5 0.5h3.8l2.2 2.2v6.3h-6z" fill="none" stroke="#9a9a9a" stroke-width="0.9"/><path d="M6.3 0.5l2.2 2.2h-2.2z" fill="#9a9a9a"/><path d="M0.5 2v7.5h5" fill="none" stroke="#8a8a8a" stroke-width="0.9"/></svg>
<svg class="a" style="left:72px;top:338.5px;" width="8" height="10" viewBox="0 0 8 10"><path d="M0.5 1.5h7v8h-7z" fill="none" stroke="#9a9a9a" stroke-width="0.9"/><path d="M2.3 0.3h3.4v2.2h-3.4z" fill="#9a9a9a"/><path d="M2.3 4.8h3.4 M2.3 7.3h3.4" stroke="#9a9a9a" stroke-width="0.9"/></svg>
<svg class="a" style="left:88px;top:338.5px;" width="8" height="10" viewBox="0 0 8 10"><path d="M0 1.2h8v1.1h-8z M2.7 0h2.6v1.2h-2.6z M0.8 3h6.4v6.5h-6.4z" fill="#a0a0a0"/><path d="M2.5 4v4.5 M4 4v4.5 M5.5 4v4.5" stroke="#6e6e6e" stroke-width="0.6"/></svg>
<div class="a" style="left:100.5px;top:336px;width:1px;height:15px;background:#4a4a4a;"></div>
<svg class="a" style="left:103px;top:336px;" width="13" height="13" viewBox="0 0 13 13"><g transform="translate(8 5.8) rotate(45)"><path d="M-4.5 0 L-2.5 -2.4 H3.8 V2.4 H-2.5 Z" fill="#a0a0a0"/><circle cx="-2.3" cy="0" r="0.7" fill="#393939"/></g><path d="M1 10.5h1 M2.5 10.5h1.5 M4.5 10.5h1.5" stroke="#bbb" stroke-width="1.2"/></svg>
<div class="a" style="left:118.5px;top:336px;width:46px;height:14.5px;background:#333333;border:1px solid #4e4e4e;border-radius:1px;"></div>
<div class="t" style="left:123px;top:338.1px;color:#e2e2e2;font-size:7.5px;">Import Tags</div>
<div class="a" style="left:0px;top:332.5px;width:24.5px;height:19.5px;border:3px solid #e8141a;"></div>
<div class="a" style="left:3px;top:368px;width:207px;height:13.5px;background:#555555;"></div>
<div class="t" style="left:4.5px;top:369.1px;color:#e0e0e0;font-size:7.5px;">Name</div>
<svg class="a" style="left:64px;top:373.3px;" width="5" height="3.5" viewBox="0 0 5 3.5"><path d="M0 0h5l-2.5 3.5z" fill="#f0f0f0"/></svg>
<div class="t" style="left:73px;top:369.1px;color:#e0e0e0;font-size:7.5px;">Data Type</div>
<div class="t" style="left:127.5px;top:369.1px;color:#e0e0e0;font-size:7.5px;">I/O Device</div>
<div class="t" style="left:171.5px;top:369.1px;color:#e0e0e0;font-size:7.5px;">I/O Address</div>
<div class="a" style="left:3px;top:381px;width:207px;height:18.8px;background:#505050;"></div>
<svg class="a" style="left:20px;top:383px;" width="12" height="12" viewBox="0 0 12 12"><g transform="translate(6.2 6.2) rotate(45)"><path d="M-5 0L-3-2.5H4.5V2.5H-3Z" fill="none" stroke="#9a9a9a" stroke-width="0.9"/><circle cx="-2.7" cy="0" r="0.7" fill="#9a9a9a"/></g></svg>
<div class="t" style="left:36px;top:383.6px;color:#e6e6e6;font-size:7.5px;">Switch</div>
<div class="t" style="left:90px;top:384.6px;color:#e6e6e6;font-size:7.5px;">BOOL</div>
<div class="t" style="left:138px;top:384.6px;color:#e6e6e6;font-size:7.5px;">Virtual</div>
<div class="a" style="left:70.5px;top:381px;width:1px;height:162px;background:#575757;"></div>
<div class="a" style="left:126px;top:381px;width:1px;height:162px;background:#575757;"></div>
<div class="a" style="left:170px;top:381px;width:1px;height:162px;background:#575757;"></div>
<div class="a" style="left:3px;top:543px;width:207px;height:9px;background:#454545;border:1px solid #505050;"></div>
<div class="a" style="left:10px;top:544.5px;width:92px;height:6px;background:#2e2e2e;border-radius:3px;"></div>
<svg class="a" style="left:5.5px;top:545.5px;" width="4" height="5" viewBox="0 0 4 5"><path d="M3 0.5l-2 2 2 2" fill="none" stroke="#c0c0c0" stroke-width="1.2"/></svg>
<svg class="a" style="left:204.5px;top:545.5px;" width="4" height="5" viewBox="0 0 4 5"><path d="M1 0.5l2 2-2 2" fill="none" stroke="#c0c0c0" stroke-width="1.2"/></svg>
<div class="a" style="left:212px;top:88px;width:15px;height:14px;background:#3a3a3a;border:1px solid #5a5a5a;"></div>
<svg class="a" style="left:215px;top:91px;" width="9" height="9" viewBox="0 0 9 9"><rect x="0" y="0" width="4" height="4" fill="#9a9a9a"/><rect x="5" y="0" width="4" height="4" fill="#9a9a9a"/><rect x="0" y="5" width="4" height="4" fill="#9a9a9a"/><rect x="5" y="5" width="4" height="4" fill="#9a9a9a"/></svg>
<div class="a" style="left:228px;top:87px;width:54px;height:14px;background:#787878;"></div>
<div class="a" style="left:228px;top:100.6px;width:54px;height:1.8px;background:#0a74da;"></div>
<div class="t" style="left:233.3px;top:88.6px;color:#dedede;font-size:7.5px;">New Page</div>
<svg class="a" style="left:272.5px;top:91.8px;" width="5" height="5" viewBox="0 0 5 5"><path d="M0 0l5 5 M5 0l-5 5" stroke="#5c5c5c" stroke-width="1"/></svg>
<div class="a" style="left:212px;top:102.5px;width:627px;height:450px;background:#484848;"></div>
<svg class="a" style="left:223px;top:102.3px;" width="606" height="12" viewBox="0 0 606 12"><rect x="3.75" y="9.50" width="0.8" height="1.5" fill="#8a8a8a"/><rect x="9.20" y="9.50" width="0.8" height="1.5" fill="#8a8a8a"/><rect x="14.65" y="9.50" width="0.8" height="1.5" fill="#8a8a8a"/><rect x="20.10" y="9.50" width="0.8" height="1.5" fill="#8a8a8a"/><rect x="25.55" y="9.50" width="0.8" height="1.5" fill="#8a8a8a"/><rect x="31.00" y="8.00" width="0.8" height="3" fill="#8a8a8a"/><rect x="36.45" y="9.50" width="0.8" height="1.5" fill="#8a8a8a"/><rect x="41.90" y="9.50" width="0.8" height="1.5" fill="#8a8a8a"/><rect x="47.35" y="9.50" width="0.8" height="1.5" fill="#8a8a8a"/><rect x="52.80" y="9.50" width="0.8" height="1.5" fill="#8a8a8a"/><rect x="58.25" y="9.50" width="0.8" height="1.5" fill="#8a8a8a"/><rect x="63.70" y="9.50" width="0.8" height="1.5" fill="#8a8a8a"/><rect x="69.15" y="9.50" width="0.8" height="1.5" fill="#8a8a8a"/><rect x="74.60" y="9.50" width="0.8" height="1.5" fill="#8a8a8a"/><rect x="80.05" y="9.50" width="0.8" height="1.5" fill="#8a8a8a"/><rect x="85.50" y="8.00" width="0.8" height="3" fill="#8a8a8a"/><rect x="90.95" y="9.50" width="0.8" height="1.5" fill="#8a8a8a"/><rect x="96.40" y="9.50" width="0.8" height="1.5" fill="#8a8a8a"/><rect x="101.85" y="9.50" width="0.8" height="1.5" fill="#8a8a8a"/><rect x="107.30" y="9.50" width="0.8" height="1.5" fill="#8a8a8a"/><rect x="112.75" y="9.50" width="0.8" height="1.5" fill="#8a8a8a"/><rect x="118.20" y="9.50" width="0.8" height="1.5" fill="#8a8a8a"/><rect x="123.65" y="9.50" width="0.8" height="1.5" fill="#8a8a8a"/><rect x="129.10" y="9.50" width="0.8" height="1.5" fill="#8a8a8a"/><rect x="134.55" y="9.50" width="0.8" height="1.5" fill="#8a8a8a"/><rect x="140.00" y="8.00" width="0.8" height="3" fill="#8a8a8a"/><rect x="145.45" y="9.50" width="0.8" height="1.5" fill="#8a8a8a"/><rect x="150.90" y="9.50" width="0.8" height="1.5" fill="#8a8a8a"/><rect x="156.35" y="9.50" width="0.8" height="1.5" fill="#8a8a8a"/><rect x="161.80" y="9.50" width="0.8" height="1.5" fill="#8a8a8a"/><rect x="167.25" y="9.50" width="0.8" height="1.5" fill="#8a8a8a"/><rect x="172.70" y="9.50" width="0.8" height="1.5" fill="#8a8a8a"/><rect x="178.15" y="9.50" width="0.8" height="1.5" fill="#8a8a8a"/><rect x="183.60" y="9.50" width="0.8" height="1.5" fill="#8a8a8a"/><rect x="189.05" y="9.50" width="0.8" height="1.5" fill="#8a8a8a"/><rect x="194.50" y="8.00" width="0.8" height="3" fill="#8a8a8a"/><rect x="199.95" y="9.50" width="0.8" height="1.5" fill="#8a8a8a"/><rect x="205.40" y="9.50" width="0.8" height="1.5" fill="#8a8a8a"/><rect x="210.85" y="9.50" width="0.8" height="1.5" fill="#8a8a8a"/><rect x="216.30" y="9.50" width="0.8" height="1.5" fill="#8a8a8a"/><rect x="221.75" y="9.50" width="0.8" height="1.5" fill="#8a8a8a"/><rect x="227.20" y="9.50" width="0.8" height="1.5" fill="#8a8a8a"/><rect x="232.65" y="9.50" width="0.8" height="1.5" fill="#8a8a8a"/><rect x="238.10" y="9.50" width="0.8" height="1.5" fill="#8a8a8a"/><rect x="243.55" y="9.50" width="0.8" height="1.5" fill="#8a8a8a"/><rect x="249.00" y="8.00" width="0.8" height="3" fill="#8a8a8a"/><rect x="254.45" y="9.50" width="0.8" height="1.5" fill="#8a8a8a"/><rect x="259.90" y="9.50" width="0.8" height="1.5" fill="#8a8a8a"/><rect x="265.35" y="9.50" width="0.8" height="1.5" fill="#8a8a8a"/><rect x="270.80" y="9.50" width="0.8" height="1.5" fill="#8a8a8a"/><rect x="276.25" y="9.50" width="0.8" height="1.5" fill="#8a8a8a"/><rect x="281.70" y="9.50" width="0.8" height="1.5" fill="#8a8a8a"/><rect x="287.15" y="9.50" width="0.8" height="1.5" fill="#8a8a8a"/><rect x="292.60" y="9.50" width="0.8" height="1.5" fill="#8a8a8a"/><rect x="298.05" y="9.50" width="0.8" height="1.5" fill="#8a8a8a"/><rect x="303.50" y="8.00" width="0.8" height="3" fill="#8a8a8a"/><rect x="308.95" y="9.50" width="0.8" height="1.5" fill="#8a8a8a"/><rect x="314.40" y="9.50" width="0.8" height="1.5" fill="#8a8a8a"/><rect x="319.85" y="9.50" width="0.8" height="1.5" fill="#8a8a8a"/><rect x="325.30" y="9.50" width="0.8" height="1.5" fill="#8a8a8a"/><rect x="330.75" y="9.50" width="0.8" height="1.5" fill="#8a8a8a"/><rect x="336.20" y="9.50" width="0.8" height="1.5" fill="#8a8a8a"/><rect x="341.65" y="9.50" width="0.8" height="1.5" fill="#8a8a8a"/><rect x="347.10" y="9.50" width="0.8" height="1.5" fill="#8a8a8a"/><rect x="352.55" y="9.50" width="0.8" height="1.5" fill="#8a8a8a"/><rect x="358.00" y="8.00" width="0.8" height="3" fill="#8a8a8a"/><rect x="363.45" y="9.50" width="0.8" height="1.5" fill="#8a8a8a"/><rect x="368.90" y="9.50" width="0.8" height="1.5" fill="#8a8a8a"/><rect x="374.35" y="9.50" width="0.8" height="1.5" fill="#8a8a8a"/><rect x="379.80" y="9.50" width="0.8" height="1.5" fill="#8a8a8a"/><rect x="385.25" y="9.50" width="0.8" height="1.5" fill="#8a8a8a"/><rect x="390.70" y="9.50" width="0.8" height="1.5" fill="#8a8a8a"/><rect x="396.15" y="9.50" width="0.8" height="1.5" fill="#8a8a8a"/><rect x="401.60" y="9.50" width="0.8" height="1.5" fill="#8a8a8a"/><rect x="407.05" y="9.50" width="0.8" height="1.5" fill="#8a8a8a"/><rect x="412.50" y="8.00" width="0.8" height="3" fill="#8a8a8a"/><rect x="417.95" y="9.50" width="0.8" height="1.5" fill="#8a8a8a"/><rect x="423.40" y="9.50" width="0.8" height="1.5" fill="#8a8a8a"/><rect x="428.85" y="9.50" width="0.8" height="1.5" fill="#8a8a8a"/><rect x="434.30" y="9.50" width="0.8" height="1.5" fill="#8a8a8a"/><rect x="439.75" y="9.50" width="0.8" height="1.5" fill="#8a8a8a"/><rect x="445.20" y="9.50" width="0.8" height="1.5" fill="#8a8a8a"/><rect x="450.65" y="9.50" width="0.8" height="1.5" fill="#8a8a8a"/><rect x="456.10" y="9.50" width="0.8" height="1.5" fill="#8a8a8a"/><rect x="461.55" y="9.50" width="0.8" height="1.5" fill="#8a8a8a"/><rect x="467.00" y="8.00" width="0.8" height="3" fill="#8a8a8a"/><rect x="472.45" y="9.50" width="0.8" height="1.5" fill="#8a8a8a"/><rect x="477.90" y="9.50" width="0.8" height="1.5" fill="#8a8a8a"/><rect x="483.35" y="9.50" width="0.8" height="1.5" fill="#8a8a8a"/><rect x="488.80" y="9.50" width="0.8" height="1.5" fill="#8a8a8a"/><rect x="494.25" y="9.50" width="0.8" height="1.5" fill="#8a8a8a"/><rect x="499.70" y="9.50" width="0.8" height="1.5" fill="#8a8a8a"/><rect x="505.15" y="9.50" width="0.8" height="1.5" fill="#8a8a8a"/><rect x="510.60" y="9.50" width="0.8" height="1.5" fill="#8a8a8a"/><rect x="516.05" y="9.50" width="0.8" height="1.5" fill="#8a8a8a"/><rect x="521.50" y="8.00" width="0.8" height="3" fill="#8a8a8a"/><rect x="526.95" y="9.50" width="0.8" height="1.5" fill="#8a8a8a"/><rect x="532.40" y="9.50" width="0.8" height="1.5" fill="#8a8a8a"/><rect x="537.85" y="9.50" width="0.8" height="1.5" fill="#8a8a8a"/><rect x="543.30" y="9.50" width="0.8" height="1.5" fill="#8a8a8a"/><rect x="548.75" y="9.50" width="0.8" height="1.5" fill="#8a8a8a"/><rect x="554.20" y="9.50" width="0.8" height="1.5" fill="#8a8a8a"/><rect x="559.65" y="9.50" width="0.8" height="1.5" fill="#8a8a8a"/><rect x="565.10" y="9.50" width="0.8" height="1.5" fill="#8a8a8a"/><rect x="570.55" y="9.50" width="0.8" height="1.5" fill="#8a8a8a"/><rect x="576.00" y="8.00" width="0.8" height="3" fill="#8a8a8a"/><rect x="581.45" y="9.50" width="0.8" height="1.5" fill="#8a8a8a"/><rect x="586.90" y="9.50" width="0.8" height="1.5" fill="#8a8a8a"/><rect x="592.35" y="9.50" width="0.8" height="1.5" fill="#8a8a8a"/><rect x="597.80" y="9.50" width="0.8" height="1.5" fill="#8a8a8a"/><rect x="603.25" y="9.50" width="0.8" height="1.5" fill="#8a8a8a"/><rect x="1" y="11" width="605" height="1" fill="#8e8e8e"/></svg>
<div class="t tc" style="left:234.0px;top:100.5px;width:40px;text-align:center;color:#dadada;font-size:6px;transform:none;-webkit-text-stroke:0.05px currentColor">-100</div>
<div class="t tc" style="left:288.5px;top:100.5px;width:40px;text-align:center;color:#dadada;font-size:6px;transform:none;-webkit-text-stroke:0.05px currentColor">0</div>
<div class="t tc" style="left:343.0px;top:100.5px;width:40px;text-align:center;color:#dadada;font-size:6px;transform:none;-webkit-text-stroke:0.05px currentColor">100</div>
<div class="t tc" style="left:397.5px;top:100.5px;width:40px;text-align:center;color:#dadada;font-size:6px;transform:none;-webkit-text-stroke:0.05px currentColor">200</div>
<div class="t tc" style="left:452.0px;top:100.5px;width:40px;text-align:center;color:#dadada;font-size:6px;transform:none;-webkit-text-stroke:0.05px currentColor">300</div>
<div class="t tc" style="left:506.5px;top:100.5px;width:40px;text-align:center;color:#dadada;font-size:6px;transform:none;-webkit-text-stroke:0.05px currentColor">400</div>
<div class="t tc" style="left:561.0px;top:100.5px;width:40px;text-align:center;color:#dadada;font-size:6px;transform:none;-webkit-text-stroke:0.05px currentColor">500</div>
<div class="t tc" style="left:615.5px;top:100.5px;width:40px;text-align:center;color:#dadada;font-size:6px;transform:none;-webkit-text-stroke:0.05px currentColor">600</div>
<div class="t tc" style="left:670.0px;top:100.5px;width:40px;text-align:center;color:#dadada;font-size:6px;transform:none;-webkit-text-stroke:0.05px currentColor">700</div>
<div class="t tc" style="left:724.5px;top:100.5px;width:40px;text-align:center;color:#dadada;font-size:6px;transform:none;-webkit-text-stroke:0.05px currentColor">800</div>
<div class="t tc" style="left:779.0px;top:100.5px;width:40px;text-align:center;color:#dadada;font-size:6px;transform:none;-webkit-text-stroke:0.05px currentColor">900</div>
<svg class="a" style="left:212px;top:114px;" width="12" height="430" viewBox="0 0 12 430"><rect x="9.00" y="9.70" width="1.5" height="0.8" fill="#8a8a8a"/><rect x="9.00" y="15.15" width="1.5" height="0.8" fill="#8a8a8a"/><rect x="9.00" y="20.60" width="1.5" height="0.8" fill="#8a8a8a"/><rect x="9.00" y="26.05" width="1.5" height="0.8" fill="#8a8a8a"/><rect x="7.50" y="31.50" width="3" height="0.8" fill="#8a8a8a"/><rect x="9.00" y="36.95" width="1.5" height="0.8" fill="#8a8a8a"/><rect x="9.00" y="42.40" width="1.5" height="0.8" fill="#8a8a8a"/><rect x="9.00" y="47.85" width="1.5" height="0.8" fill="#8a8a8a"/><rect x="9.00" y="53.30" width="1.5" height="0.8" fill="#8a8a8a"/><rect x="9.00" y="58.75" width="1.5" height="0.8" fill="#8a8a8a"/><rect x="9.00" y="64.20" width="1.5" height="0.8" fill="#8a8a8a"/><rect x="9.00" y="69.65" width="1.5" height="0.8" fill="#8a8a8a"/><rect x="9.00" y="75.10" width="1.5" height="0.8" fill="#8a8a8a"/><rect x="9.00" y="80.55" width="1.5" height="0.8" fill="#8a8a8a"/><rect x="7.50" y="86.00" width="3" height="0.8" fill="#8a8a8a"/><rect x="9.00" y="91.45" width="1.5" height="0.8" fill="#8a8a8a"/><rect x="9.00" y="96.90" width="1.5" height="0.8" fill="#8a8a8a"/><rect x="9.00" y="102.35" width="1.5" height="0.8" fill="#8a8a8a"/><rect x="9.00" y="107.80" width="1.5" height="0.8" fill="#8a8a8a"/><rect x="9.00" y="113.25" width="1.5" height="0.8" fill="#8a8a8a"/><rect x="9.00" y="118.70" width="1.5" height="0.8" fill="#8a8a8a"/><rect x="9.00" y="124.15" width="1.5" height="0.8" fill="#8a8a8a"/><rect x="9.00" y="129.60" width="1.5" height="0.8" fill="#8a8a8a"/><rect x="9.00" y="135.05" width="1.5" height="0.8" fill="#8a8a8a"/><rect x="7.50" y="140.50" width="3" height="0.8" fill="#8a8a8a"/><rect x="9.00" y="145.95" width="1.5" height="0.8" fill="#8a8a8a"/><rect x="9.00" y="151.40" width="1.5" height="0.8" fill="#8a8a8a"/><rect x="9.00" y="156.85" width="1.5" height="0.8" fill="#8a8a8a"/><rect x="9.00" y="162.30" width="1.5" height="0.8" fill="#8a8a8a"/><rect x="9.00" y="167.75" width="1.5" height="0.8" fill="#8a8a8a"/><rect x="9.00" y="173.20" width="1.5" height="0.8" fill="#8a8a8a"/><rect x="9.00" y="178.65" width="1.5" height="0.8" fill="#8a8a8a"/><rect x="9.00" y="184.10" width="1.5" height="0.8" fill="#8a8a8a"/><rect x="9.00" y="189.55" width="1.5" height="0.8" fill="#8a8a8a"/><rect x="7.50" y="195.00" width="3" height="0.8" fill="#8a8a8a"/><rect x="9.00" y="200.45" width="1.5" height="0.8" fill="#8a8a8a"/><rect x="9.00" y="205.90" width="1.5" height="0.8" fill="#8a8a8a"/><rect x="9.00" y="211.35" width="1.5" height="0.8" fill="#8a8a8a"/><rect x="9.00" y="216.80" width="1.5" height="0.8" fill="#8a8a8a"/><rect x="9.00" y="222.25" width="1.5" height="0.8" fill="#8a8a8a"/><rect x="9.00" y="227.70" width="1.5" height="0.8" fill="#8a8a8a"/><rect x="9.00" y="233.15" width="1.5" height="0.8" fill="#8a8a8a"/><rect x="9.00" y="238.60" width="1.5" height="0.8" fill="#8a8a8a"/><rect x="9.00" y="244.05" width="1.5" height="0.8" fill="#8a8a8a"/><rect x="7.50" y="249.50" width="3" height="0.8" fill="#8a8a8a"/><rect x="9.00" y="254.95" width="1.5" height="0.8" fill="#8a8a8a"/><rect x="9.00" y="260.40" width="1.5" height="0.8" fill="#8a8a8a"/><rect x="9.00" y="265.85" width="1.5" height="0.8" fill="#8a8a8a"/><rect x="9.00" y="271.30" width="1.5" height="0.8" fill="#8a8a8a"/><rect x="9.00" y="276.75" width="1.5" height="0.8" fill="#8a8a8a"/><rect x="9.00" y="282.20" width="1.5" height="0.8" fill="#8a8a8a"/><rect x="9.00" y="287.65" width="1.5" height="0.8" fill="#8a8a8a"/><rect x="9.00" y="293.10" width="1.5" height="0.8" fill="#8a8a8a"/><rect x="9.00" y="298.55" width="1.5" height="0.8" fill="#8a8a8a"/><rect x="7.50" y="304.00" width="3" height="0.8" fill="#8a8a8a"/><rect x="9.00" y="309.45" width="1.5" height="0.8" fill="#8a8a8a"/><rect x="9.00" y="314.90" width="1.5" height="0.8" fill="#8a8a8a"/><rect x="9.00" y="320.35" width="1.5" height="0.8" fill="#8a8a8a"/><rect x="9.00" y="325.80" width="1.5" height="0.8" fill="#8a8a8a"/><rect x="9.00" y="331.25" width="1.5" height="0.8" fill="#8a8a8a"/><rect x="9.00" y="336.70" width="1.5" height="0.8" fill="#8a8a8a"/><rect x="9.00" y="342.15" width="1.5" height="0.8" fill="#8a8a8a"/><rect x="9.00" y="347.60" width="1.5" height="0.8" fill="#8a8a8a"/><rect x="9.00" y="353.05" width="1.5" height="0.8" fill="#8a8a8a"/><rect x="7.50" y="358.50" width="3" height="0.8" fill="#8a8a8a"/><rect x="9.00" y="363.95" width="1.5" height="0.8" fill="#8a8a8a"/><rect x="9.00" y="369.40" width="1.5" height="0.8" fill="#8a8a8a"/><rect x="9.00" y="374.85" width="1.5" height="0.8" fill="#8a8a8a"/><rect x="9.00" y="380.30" width="1.5" height="0.8" fill="#8a8a8a"/><rect x="9.00" y="385.75" width="1.5" height="0.8" fill="#8a8a8a"/><rect x="9.00" y="391.20" width="1.5" height="0.8" fill="#8a8a8a"/><rect x="9.00" y="396.65" width="1.5" height="0.8" fill="#8a8a8a"/><rect x="9.00" y="402.10" width="1.5" height="0.8" fill="#8a8a8a"/><rect x="9.00" y="407.55" width="1.5" height="0.8" fill="#8a8a8a"/><rect x="7.50" y="413.00" width="3" height="0.8" fill="#8a8a8a"/><rect x="9.00" y="418.45" width="1.5" height="0.8" fill="#8a8a8a"/><rect x="9.00" y="423.90" width="1.5" height="0.8" fill="#8a8a8a"/><rect x="10.5" y="1.5" width="1" height="428.5" fill="#8e8e8e"/></svg>
<div class="t tc" style="left:197px;top:139.5px;width:40px;text-align:center;color:#e0e0e0;font-size:5px;-webkit-text-stroke:0.1px currentColor;transform:rotate(-90deg)">-60</div>
<div class="t tc" style="left:197px;top:194.0px;width:40px;text-align:center;color:#e0e0e0;font-size:5px;-webkit-text-stroke:0.1px currentColor;transform:rotate(-90deg)">40</div>
<div class="t tc" style="left:197px;top:248.5px;width:40px;text-align:center;color:#e0e0e0;font-size:5px;-webkit-text-stroke:0.1px currentColor;transform:rotate(-90deg)">140</div>
<div class="t tc" style="left:197px;top:303.0px;width:40px;text-align:center;color:#e0e0e0;font-size:5px;-webkit-text-stroke:0.1px currentColor;transform:rotate(-90deg)">240</div>
<div class="t tc" style="left:197px;top:357.5px;width:40px;text-align:center;color:#e0e0e0;font-size:5px;-webkit-text-stroke:0.1px currentColor;transform:rotate(-90deg)">340</div>
<div class="t tc" style="left:197px;top:412.0px;width:40px;text-align:center;color:#e0e0e0;font-size:5px;-webkit-text-stroke:0.1px currentColor;transform:rotate(-90deg)">440</div>
<div class="t tc" style="left:197px;top:466.5px;width:40px;text-align:center;color:#e0e0e0;font-size:5px;-webkit-text-stroke:0.1px currentColor;transform:rotate(-90deg)">540</div>
<div class="t tc" style="left:197px;top:521.0px;width:40px;text-align:center;color:#e0e0e0;font-size:5px;-webkit-text-stroke:0.1px currentColor;transform:rotate(-90deg)">640</div>
<div class="a" style="left:225px;top:115.5px;width:605px;height:428px;background:#5f6062;"></div>
<div class="a" style="left:309.5px;top:179px;width:436.5px;height:261.5px;background:#ffffff;"></div>
<div class="a" style="left:625.5px;top:268px;width:58px;height:58px;border-radius:50%;background:#c8c8c8"></div>
<div class="a" style="left:662px;top:290px;width:7px;height:2px;background:#ababab;"></div>
<div class="a" style="left:662px;top:296px;width:7px;height:2px;background:#ababab;"></div>
<svg class="a" style="left:560px;top:266px;" width="130" height="64" viewBox="0 0 130 64"><path d="M0 2.5H124V60.5H0" fill="none" stroke="#6aa1f5" stroke-width="1.2"/><circle cx="124" cy="2.5" r="1.6" fill="#fff" stroke="#6aa1f5" stroke-width="1"/><circle cx="124" cy="31" r="1.6" fill="#fff" stroke="#6aa1f5" stroke-width="1"/><circle cx="124" cy="60.5" r="1.6" fill="#fff" stroke="#6aa1f5" stroke-width="1"/></svg>
<div class="a" style="left:830px;top:115.5px;width:8.5px;height:428px;background:#434343;"></div>
<div class="a" style="left:831px;top:312px;width:5.5px;height:38px;background:#2e2e2e;border-radius:3px;"></div>
<svg class="a" style="left:831px;top:118px;" width="6" height="4" viewBox="0 0 6 4"><path d="M0.5 3.5l2.5-3 2.5 3" fill="none" stroke="#ccc" stroke-width="1"/></svg>
<svg class="a" style="left:831px;top:537px;" width="6" height="4" viewBox="0 0 6 4"><path d="M0.5 0.5l2.5 3 2.5-3" fill="none" stroke="#ccc" stroke-width="1"/></svg>
<div class="a" style="left:224.5px;top:543px;width:605.5px;height:8.5px;background:#434343;"></div>
<div class="a" style="left:830px;top:543px;width:8.5px;height:9px;background:#3c3c3c;"></div>
<div class="a" style="left:487px;top:544.5px;width:80.5px;height:5.5px;background:#2e2e2e;border-radius:3px;"></div>
<svg class="a" style="left:228px;top:545px;" width="4" height="5" viewBox="0 0 4 5"><path d="M3 0.5l-2 2 2 2" fill="none" stroke="#c8c8c8" stroke-width="1.2"/></svg>
<svg class="a" style="left:824px;top:545px;" width="4" height="5" viewBox="0 0 4 5"><path d="M1 0.5l2 2-2 2" fill="none" stroke="#c8c8c8" stroke-width="1.2"/></svg>
<div class="a" style="left:224.5px;top:551.5px;width:605.5px;height:1px;background:#5a5a5a;"></div>
<div class="a" style="left:841px;top:87px;width:61px;height:14px;background:#787878;"></div>
<div class="a" style="left:841px;top:100.6px;width:61px;height:1.8px;background:#0a74da;"></div>
<div class="t" style="left:847px;top:88.6px;color:#dedede;font-size:7.5px;">Switch/Lamp</div>
<svg class="a" style="left:892.5px;top:91.8px;" width="5" height="5" viewBox="0 0 5 5"><path d="M0 0l5 5 M5 0l-5 5" stroke="#5c5c5c" stroke-width="1"/></svg>
<div class="a" style="left:903px;top:88px;width:62px;height:14.5px;background:#3d3d3d;border:1px solid #4c4c4c;"></div>
<div class="t" style="left:908.5px;top:90.1px;color:#727272;font-size:7.5px;transform:scaleX(.88)">Resource Library</div>
<div class="a" style="left:840px;top:102.5px;width:207px;height:450px;background:#2b2b2b;border-left:1px solid #3c3c3c;border-bottom:1px solid #4a4a4a;"></div>
<div class="a" style="left:840px;top:102px;width:207px;height:16px;background:#4b4b4b;border-top:1px solid #565656;border-bottom:1px solid #545454;"></div>
<svg class="a" style="left:846px;top:107px;" width="8" height="8" viewBox="0 0 8 8"><path d="M0 0.5h5 M0 3.5h5 M0 6.5h5" stroke="#b0b0b0" stroke-width="1"/><path d="M6.5 0v7" stroke="#8a8a8a" stroke-width="1"/><path d="M5 6l1.5 2 1.5-2z" fill="#8a8a8a"/></svg>
<svg class="a" style="left:859px;top:107px;" width="8" height="8" viewBox="0 0 8 8"><path d="M0 0.5h5 M0 3.5h5 M0 6.5h5" stroke="#b0b0b0" stroke-width="1"/><path d="M6.5 0v2 M6.5 3v2 M6.5 6v2" stroke="#8a8a8a" stroke-width="1"/></svg>
<div class="a" style="left:1040px;top:118px;width:7px;height:223px;background:#3a3a3a;"></div>
<div class="a" style="left:1041px;top:127px;width:5px;height:113px;background:#2c2c2c;border-radius:2px;"></div>
<svg class="a" style="left:1040px;top:121px;" width="7" height="4" viewBox="0 0 7 4"><path d="M1 3.5l2.5-3 2.5 3" fill="none" stroke="#bbb" stroke-width="1"/></svg>
<svg class="a" style="left:1040px;top:334px;" width="7" height="4" viewBox="0 0 7 4"><path d="M1 0.5l2.5 3 2.5-3" fill="none" stroke="#bbb" stroke-width="1"/></svg>
<div class="t" style="left:860px;top:121.6px;color:#e0e0e0;font-size:7.5px;">Name:</div>
<div class="t" style="left:953px;top:121.6px;color:#3d8fd9;font-size:7.5px;">New Lamp</div>
<div class="t" style="left:860px;top:137.1px;color:#e0e0e0;font-size:7.5px;">State:</div>
<div class="t" style="left:954px;top:137.1px;color:#e0782f;font-size:7.5px;">0</div>
<div class="a" style="left:841px;top:149px;width:199px;height:26.5px;background:#505050;"></div>
<svg class="a" style="left:850px;top:154.3px;" width="5" height="3.5" viewBox="0 0 5 3.5"><path d="M0 0h5l-2.5 3.5z" fill="#f0f0f0"/></svg>
<div class="t" style="left:860px;top:150.1px;color:#e8e8e8;font-size:8px;">States</div>
<svg class="a" style="left:857px;top:167px;" width="5" height="3.5" viewBox="0 0 5 3.5"><path d="M0 0h5l-2.5 3.5z" fill="#f0f0f0"/></svg>
<div class="t" style="left:866.5px;top:162.6px;color:#e8e8e8;font-size:8px;">State 0</div>
<svg class="a" style="left:1028.5px;top:163px;" width="9" height="11" viewBox="0 0 9 11"><path d="M0.5 0.5h5.5l2.5 2.5v7.5h-8z" fill="#707070" stroke="#aaa" stroke-width="0.8"/><circle cx="4.3" cy="6" r="1.8" fill="none" stroke="#ddd" stroke-width="0.8"/><path d="M5.6 7.3l1.5 1.5" stroke="#ddd" stroke-width="0.8"/></svg>
<div class="t" style="left:867px;top:178.6px;color:#e0e0e0;font-size:7.5px;">Image:</div>
<div class="t" style="left:956px;top:178.6px;color:#3d8fd9;font-size:7.5px;">RoundToggleSwitch...</div>
<svg class="a" style="left:1028px;top:178px;" width="11" height="11" viewBox="0 0 11 11"><path d="M1 10l1-3 6-6 2 2-6 6z" fill="#bdbdbd"/></svg>
<div class="t" style="left:867px;top:193.6px;color:#e0e0e0;font-size:7.5px;">Text:</div>
<div class="t" style="left:956px;top:194.1px;color:#3d8fd9;font-size:7.5px;">...</div>
<div class="t" style="left:867px;top:208.6px;color:#e0e0e0;font-size:7.5px;">Font Name:</div>
<div class="a" style="left:954px;top:207.5px;width:72px;height:13px;background:#262626;border:1px solid #4a4a4a;"></div>
<div class="t" style="left:957.5px;top:208.6px;color:#e0e0e0;font-size:7.5px;">Open Sans</div>
<svg class="a" style="left:1015px;top:212.3px;" width="5" height="3.5" viewBox="0 0 5 3.5"><path d="M0 0h5l-2.5 3.5z" fill="#f0f0f0"/></svg>
<svg class="a" style="left:1028px;top:209px;" width="10" height="10" viewBox="0 0 10 10"><path d="M5 0v10 M0 5h10" stroke="#d0d0d0" stroke-width="1.1"/></svg>
<div class="t" style="left:867px;top:223.6px;color:#e0e0e0;font-size:7.5px;">Font Size:</div>
<div class="t" style="left:956px;top:223.6px;color:#e0782f;font-size:7.5px;">12</div>
<div class="t" style="left:867px;top:239.1px;color:#e0e0e0;font-size:7.5px;">Italic:</div>
<div class="a" style="left:954.5px;top:240.0px;width:9px;height:9px;background:#8a8a8a;border-radius:1px;"></div>
<div class="t" style="left:965px;top:239.1px;color:#3fad24;font-size:7.5px;">false</div>
<div class="t" style="left:867px;top:254.1px;color:#e0e0e0;font-size:7.5px;">Bold:</div>
<div class="a" style="left:954.5px;top:255.0px;width:9px;height:9px;background:#8a8a8a;border-radius:1px;"></div>
<div class="t" style="left:965px;top:254.1px;color:#3fad24;font-size:7.5px;">false</div>
<div class="t" style="left:867px;top:269.6px;color:#e0e0e0;font-size:7.5px;">Underline:</div>
<div class="a" style="left:954.5px;top:270.5px;width:9px;height:9px;background:#8a8a8a;border-radius:1px;"></div>
<div class="t" style="left:965px;top:269.6px;color:#3fad24;font-size:7.5px;">false</div>
<div class="t" style="left:867px;top:285.1px;color:#e0e0e0;font-size:7.5px;">Text Color:</div>
<div class="a" style="left:954.5px;top:283px;width:25px;height:15px;background:#454545;border-radius:1px;"></div>
<div class="a" style="left:958px;top:286.5px;width:8px;height:8px;background:#000;"></div>
<svg class="a" style="left:969.5px;top:289px;" width="6" height="4" viewBox="0 0 6 4"><path d="M0 0h6l-3 4z" fill="#f0f0f0"/></svg>
<div class="t" style="left:980.5px;top:285.1px;color:#3d8fd9;font-size:7.5px;">#000000FF</div>
<div class="t" style="left:867px;top:300.1px;color:#e0e0e0;font-size:7.5px;">Horizontal Alignment:</div>
<div class="a" style="left:954px;top:299px;width:85.5px;height:12.5px;background:#262626;border:1px solid #464646;"></div>
<div class="t" style="left:957.5px;top:300.1px;color:#e0e0e0;font-size:7.5px;">Center</div>
<svg class="a" style="left:1029px;top:303.8px;" width="5" height="3.5" viewBox="0 0 5 3.5"><path d="M0 0h5l-2.5 3.5z" fill="#f0f0f0"/></svg>
<div class="t" style="left:867px;top:315.6px;color:#e0e0e0;font-size:7.5px;">Vertical Alignment:</div>
<div class="a" style="left:954px;top:314.5px;width:85.5px;height:12.5px;background:#262626;border:1px solid #464646;"></div>
<div class="t" style="left:957.5px;top:315.6px;color:#e0e0e0;font-size:7.5px;">Middle</div>
<svg class="a" style="left:1029px;top:319.3px;" width="5" height="3.5" viewBox="0 0 5 3.5"><path d="M0 0h5l-2.5 3.5z" fill="#f0f0f0"/></svg>
<div class="a" style="left:841px;top:328px;width:199px;height:11.5px;background:#505050;"></div>
<svg class="a" style="left:857px;top:332.3px;" width="5" height="3.5" viewBox="0 0 5 3.5"><path d="M0 0h5l-2.5 3.5z" fill="#f0f0f0"/></svg>
<div class="t" style="left:866.5px;top:328.40000000000003px;color:#e8e8e8;font-size:8px;">State 1</div>
<svg class="a" style="left:1028.5px;top:328.5px;" width="9" height="11" viewBox="0 0 9 11"><path d="M0.5 0.5h5.5l2.5 2.5v7.5h-8z" fill="#707070" stroke="#aaa" stroke-width="0.8"/><circle cx="4.3" cy="6" r="1.8" fill="none" stroke="#ddd" stroke-width="0.8"/><path d="M5.6 7.3l1.5 1.5" stroke="#ddd" stroke-width="0.8"/></svg>
<div class="a" style="left:840px;top:341.5px;width:207px;height:16px;background:#2d2d2d;"></div>
<div class="a" style="left:841px;top:342px;width:61px;height:14.5px;background:#3d3d3d;border:1px solid #4c4c4c;"></div>
<div class="t" style="left:852px;top:344.1px;color:#7a7a7a;font-size:7.5px;">Appearance</div>
<div class="a" style="left:903px;top:341px;width:61px;height:14px;background:#787878;"></div>
<div class="a" style="left:903px;top:354.5px;width:61px;height:2px;background:#0a74da;"></div>
<div class="t" style="left:913.5px;top:342.6px;color:#e8e8e8;font-size:7.5px;">Transform</div>
<svg class="a" style="left:954.5px;top:345.5px;" width="5" height="5" viewBox="0 0 5 5"><path d="M0 0l5 5 M5 0l-5 5" stroke="#5c5c5c" stroke-width="1"/></svg>
<div class="a" style="left:965px;top:342px;width:62px;height:14.5px;background:#3d3d3d;border:1px solid #4c4c4c;"></div>
<div class="t" style="left:984.5px;top:344.1px;color:#7a7a7a;font-size:7.5px;">Actions</div>
<div class="a" style="left:840px;top:357.5px;width:207px;height:1px;background:#404040;"></div>
<div class="t" style="left:860px;top:359.6px;color:#e0e0e0;font-size:7.5px;">X:</div>
<div class="t" style="left:957px;top:359.6px;color:#e0782f;font-size:7.5px;">471.0</div>
<div class="t" style="left:860px;top:374.6px;color:#e0e0e0;font-size:7.5px;">Y:</div>
<div class="t" style="left:957px;top:374.6px;color:#e0782f;font-size:7.5px;">164.0</div>
<div class="t" style="left:860px;top:390.1px;color:#e0e0e0;font-size:7.5px;">Z Index:</div>
<div class="t" style="left:957px;top:390.1px;color:#e0782f;font-size:7.5px;">0</div>
<div class="t" style="left:860px;top:405.6px;color:#e0e0e0;font-size:7.5px;">Width:</div>
<div class="t" style="left:957px;top:405.6px;color:#e0782f;font-size:7.5px;">215.943491</div>
<div class="t" style="left:860px;top:420.6px;color:#e0e0e0;font-size:7.5px;">Height:</div>
<div class="t" style="left:957px;top:420.6px;color:#e0782f;font-size:7.5px;">107.0</div>
<div class="t" style="left:860px;top:435.6px;color:#e0e0e0;font-size:7.5px;">Rotation:</div>
<div class="t" style="left:957px;top:435.6px;color:#e0782f;font-size:7.5px;">0.0</div>
<div class="t" style="left:860px;top:466.6px;color:#e0e0e0;font-size:7.5px;">Rotation Center X:</div>
<div class="t" style="left:957px;top:466.6px;color:#e0782f;font-size:7.5px;">0.5</div>
<div class="t" style="left:860px;top:482.1px;color:#e0e0e0;font-size:7.5px;">Rotation Center Y:</div>
<div class="t" style="left:957px;top:482.1px;color:#e0782f;font-size:7.5px;">0.5</div>
<div class="t" style="left:860px;top:451.6px;color:#e0e0e0;font-size:7.5px;">Use Percentage:</div>
<div class="a" style="left:955.5px;top:452px;width:9px;height:9.5px;background:#8a8a8a;border-radius:1px;"></div>
<svg class="a" style="left:956.5px;top:453px;" width="8" height="8" viewBox="0 0 8 8"><path d="M1 4l2.2 2.5 4-5.5" fill="none" stroke="#fff" stroke-width="1.3"/></svg>
<div class="t" style="left:966px;top:451.6px;color:#3fad24;font-size:7.5px;">true</div>
<div class="a" style="left:379px;top:138px;width:284px;height:339.5px;box-shadow:0 0 10px 2px rgba(0,0,0,0.35)"></div>
<div class="a" style="left:379px;top:138px;width:284px;height:339.5px;background:#4a4a4a;border:1px solid #3c3c3c;"></div>
<div class="a" style="left:379px;top:138px;width:284px;height:16px;background:#ffffff;"></div>
<svg class="a" style="left:383px;top:141px;" width="9" height="9" viewBox="0 0 9 9"><rect x="0.5" y="0.5" width="8" height="8" fill="#fafafa" stroke="#e8e8ec" stroke-width="0.8"/><path d="M3 2h4v4h-1.3v-2.7h-2.7z" fill="#3aa0dd"/><path d="M1.8 3h1.4v2.7h2.8v1.3h-4.2z" fill="#6b3c9b"/></svg>
<div class="t" style="left:395px;top:140.6px;color:#333333;font-size:7.8px;-webkit-text-stroke:0.05px currentColor">Edit Tag</div>
<svg class="a" style="left:597.5px;top:145px;" width="7" height="1" viewBox="0 0 7 1"><path d="M0 0.5h7" stroke="#444" stroke-width="0.9"/></svg>
<svg class="a" style="left:622px;top:142px;" width="7" height="7" viewBox="0 0 7 7"><rect x="0.5" y="0.5" width="5.5" height="5.5" fill="none" stroke="#dcdcdc" stroke-width="0.8"/></svg>
<svg class="a" style="left:647.5px;top:142px;" width="6" height="6" viewBox="0 0 6 6"><path d="M0 0l6 6 M6 0l-6 6" stroke="#2a2a2a" stroke-width="0.9"/></svg>
<div class="a" style="left:388px;top:159.5px;width:265px;height:14px;background:#4d4d4d;border:1px solid #535353;border-bottom:none;"></div>
<svg class="a" style="left:394px;top:163px;" width="8" height="8" viewBox="0 0 8 8"><path d="M0 0.5h5 M0 3.5h5 M0 6.5h5" stroke="#b0b0b0" stroke-width="1"/><path d="M6.5 0v7" stroke="#8a8a8a" stroke-width="1"/><path d="M5 6l1.5 2 1.5-2z" fill="#8a8a8a"/></svg>
<svg class="a" style="left:407px;top:163px;" width="8" height="8" viewBox="0 0 8 8"><path d="M0 0.5h5 M0 3.5h5 M0 6.5h5" stroke="#b0b0b0" stroke-width="1"/><path d="M6.5 0v2 M6.5 3v2 M6.5 6v2" stroke="#8a8a8a" stroke-width="1"/></svg>
<div class="a" style="left:388px;top:173.5px;width:257.5px;height:11.5px;background:#565656;"></div>
<svg class="a" style="left:390.5px;top:177.5px;" width="5" height="4" viewBox="0 0 5 4"><path d="M0 0h5l-2.5 3.5z" fill="#f4f4f4"/></svg>
<div class="t" style="left:398.5px;top:173.6px;color:#e6e6e6;font-size:7.5px;">General</div>
<div class="a" style="left:388px;top:185px;width:257.5px;height:184px;background:#2b2b2b;"></div>
<div class="a" style="left:645.5px;top:173.5px;width:7.5px;height:195.5px;background:#3d3d3d;"></div>
<div class="a" style="left:646.8px;top:182.5px;width:5px;height:179.5px;background:#2c2c2c;border-radius:2px;"></div>
<svg class="a" style="left:646.3px;top:176px;" width="6" height="4" viewBox="0 0 6 4"><path d="M0.5 3.5l2.5-3 2.5 3" fill="none" stroke="#bbb" stroke-width="0.9"/></svg>
<svg class="a" style="left:646.3px;top:364.5px;" width="6" height="4" viewBox="0 0 6 4"><path d="M0.5 0.5l2.5 3 2.5-3" fill="none" stroke="#bbb" stroke-width="0.9"/></svg>
<div class="t" style="left:389.5px;top:186.1px;color:#e0e0e0;font-size:7.5px;">Tag Name</div>
<div class="t" style="left:520.5px;top:186.1px;color:#3d8fd9;font-size:7.5px;">Switch</div>
<div class="t" style="left:389.5px;top:199.6px;color:#e0e0e0;font-size:7.5px;">Group</div>
<div class="t" style="left:521px;top:200.6px;color:#c8c8c8;font-size:7.5px;">...</div>
<svg class="a" style="left:626px;top:200px;" width="11" height="9" viewBox="0 0 11 9"><path d="M0 1.5h4l1 1h6v1.3h-11z M0 4.5h11v4.5h-11z" fill="#bcbcbc"/></svg>
<div class="t" style="left:389.5px;top:213.6px;color:#e0e0e0;font-size:7.5px;">Data Type</div>
<div class="a" style="left:519px;top:212.5px;width:104px;height:12.5px;background:#262626;border:1px solid #555;"></div>
<div class="t" style="left:522.5px;top:213.1px;color:#e0e0e0;font-size:7.5px;">BOOL</div>
<svg class="a" style="left:612px;top:217.3px;" width="5" height="3.5" viewBox="0 0 5 3.5"><path d="M0 0h5l-2.5 3.5z" fill="#f0f0f0"/></svg>
<div class="t" style="left:389.5px;top:227.1px;color:#e0e0e0;font-size:7.5px;">I/O Device</div>
<div class="a" style="left:519px;top:226px;width:104px;height:12.5px;background:#262626;border:1px solid #555;"></div>
<div class="t" style="left:522.5px;top:226.6px;color:#e0e0e0;font-size:7.5px;">Virtual</div>
<svg class="a" style="left:612px;top:230.8px;" width="5" height="3.5" viewBox="0 0 5 3.5"><path d="M0 0h5l-2.5 3.5z" fill="#f0f0f0"/></svg>
<div class="t" style="left:389.5px;top:240.6px;color:#e0e0e0;font-size:7.5px;">I/O Address</div>
<div class="t" style="left:521px;top:241.6px;color:#3d8fd9;font-size:7.5px;">...</div>
<svg class="a" style="left:626px;top:240px;" width="11" height="11" viewBox="0 0 11 11"><path d="M1 10l1-3 6-6 2 2-6 6z" fill="#bdbdbd"/></svg>
<div class="t" style="left:389.5px;top:254.6px;color:#7c7c7c;font-size:7.5px;">Bit Access</div>
<div class="a" style="left:519.5px;top:255px;width:9px;height:9px;background:#4e4e4e;border-radius:1px;"></div>
<div class="t" style="left:530.5px;top:254.6px;color:#7c7c7c;font-size:7.5px;">false</div>
<div class="t" style="left:389.5px;top:268.1px;color:#7c7c7c;font-size:7.5px;">Bit Number</div>
<div class="t" style="left:521px;top:268.1px;color:#cfcfcf;font-size:7.5px;">0</div>
<div class="t" style="left:389.5px;top:281.6px;color:#e0e0e0;font-size:7.5px;">Initial Value</div>
<div class="a" style="left:519.5px;top:282.5px;width:9px;height:9px;background:#7a7a7a;border-radius:1px;"></div>
<div class="t" style="left:530.5px;top:281.1px;color:#3fad24;font-size:7.5px;">...</div>
<div class="t" style="left:389.5px;top:295.1px;color:#e0e0e0;font-size:7.5px;">Persistent</div>
<div class="a" style="left:519.5px;top:296px;width:9px;height:9px;background:#7a7a7a;border-radius:1px;"></div>
<div class="t" style="left:530.5px;top:295.1px;color:#3fad24;font-size:7.5px;">false</div>
<div class="t" style="left:389.5px;top:309.1px;color:#e0e0e0;font-size:7.5px;">Value Changed</div>
<div class="a" style="left:519px;top:307.5px;width:102.5px;height:13px;background:#262626;border:1px solid #555;"></div>
<div class="t" style="left:522.5px;top:308.6px;color:#e0e0e0;font-size:7.5px;">None</div>
<svg class="a" style="left:611px;top:312.8px;" width="5" height="3.5" viewBox="0 0 5 3.5"><path d="M0 0h5l-2.5 3.5z" fill="#f0f0f0"/></svg>
<div class="t" style="left:389.5px;top:322.6px;color:#e0e0e0;font-size:7.5px;">Quality Changed</div>
<div class="a" style="left:519px;top:321.5px;width:102.5px;height:13px;background:#262626;border:1px solid #555;"></div>
<div class="t" style="left:522.5px;top:322.6px;color:#e0e0e0;font-size:7.5px;">None</div>
<svg class="a" style="left:611px;top:326.8px;" width="5" height="3.5" viewBox="0 0 5 3.5"><path d="M0 0h5l-2.5 3.5z" fill="#f0f0f0"/></svg>
<div class="t" style="left:388.5px;top:374.1px;color:#e0e0e0;font-size:7.5px;">Description</div>
<div class="a" style="left:389px;top:390px;width:264px;height:56px;background:#2b2b2b;"></div>
<div class="a" style="left:389px;top:461px;width:35px;height:11.5px;background:#3a3a3a;border:1px solid #3a3a3a;"></div>
<div class="t tc" style="left:389px;top:460.5px;width:35px;text-align:center;color:#7a7a7a;font-size:7.5px;">Previous</div>
<div class="a" style="left:430px;top:461px;width:32px;height:11.5px;background:#3a3a3a;border:1px solid #3a3a3a;"></div>
<div class="t tc" style="left:430px;top:460.5px;width:32px;text-align:center;color:#7a7a7a;font-size:7.5px;">Next</div>
<div class="a" style="left:468px;top:461px;width:44px;height:11.5px;background:#3a3a3a;border:1px solid #3a3a3a;"></div>
<div class="t tc" style="left:468px;top:460.5px;width:44px;text-align:center;color:#eaeaea;font-size:7.5px;">Create New</div>
<div class="a" style="left:582px;top:461px;width:34.5px;height:11.5px;background:#3a3a3a;border:1px solid #4f7fb3;"></div>
<div class="t tc" style="left:582px;top:460.5px;width:34.5px;text-align:center;color:#eaeaea;font-size:7.5px;">OK</div>
<div class="a" style="left:621px;top:461px;width:32px;height:11.5px;background:#3a3a3a;border:1px solid #3a3a3a;"></div>
<div class="t tc" style="left:621px;top:460.5px;width:32px;text-align:center;color:#eaeaea;font-size:7.5px;">Cancel</div>
<div class="a" style="left:2px;top:552px;width:1045px;height:1px;background:#474747;"></div></body></html>
